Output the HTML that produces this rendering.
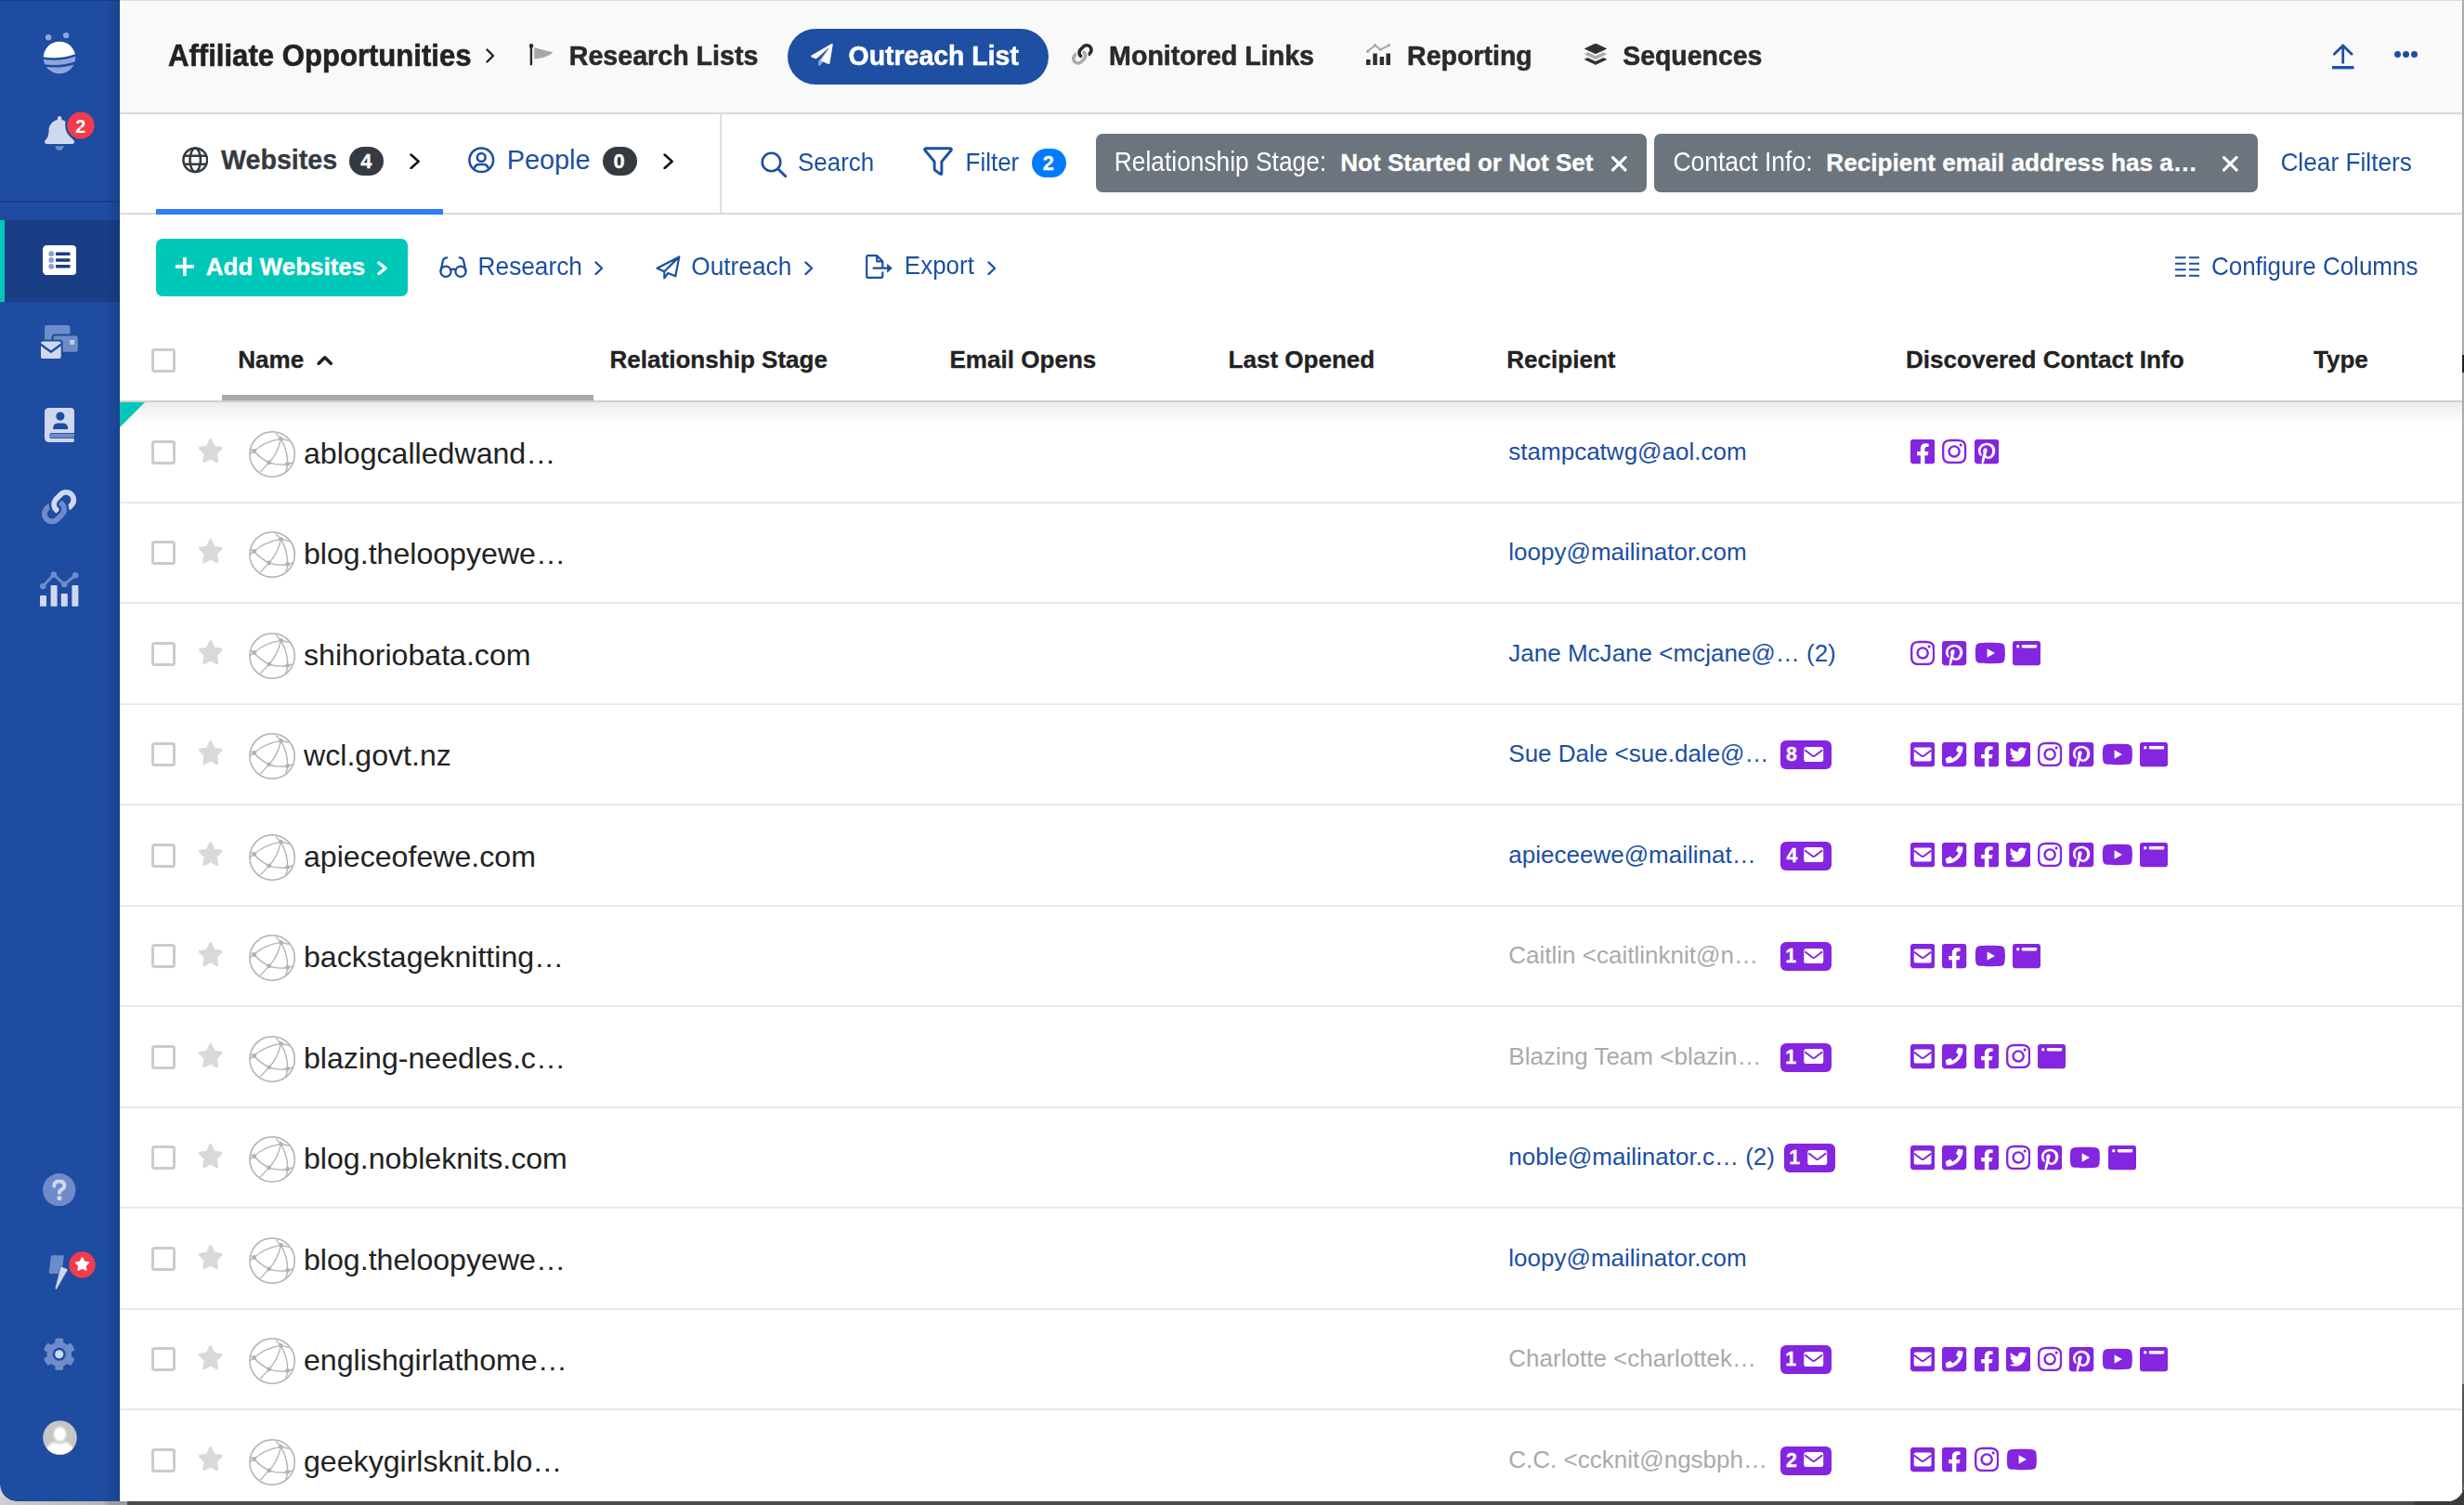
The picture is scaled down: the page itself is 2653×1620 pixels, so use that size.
<!DOCTYPE html>
<html><head><meta charset="utf-8"><title>BuzzStream - Outreach List</title>
<style>
html,body{margin:0;padding:0}
body{width:2653px;height:1620px;overflow:hidden;position:relative;background:#4b4b4b;font-family:"Liberation Sans",sans-serif}
#bg{position:absolute;left:0;top:0;width:2653px;height:1620px;background:#d6d6d6 linear-gradient(#d6d6d6,#d6d6d6)}
.a{position:absolute;display:block}
.t{position:absolute;line-height:1;white-space:nowrap}
#win{position:absolute;left:0;top:0;width:2653px;height:1616px;overflow:hidden;border-bottom-left-radius:18px;border-bottom-right-radius:18px;background:#fff}
</style></head><body>
<div id="bg"></div>
<div class="a" style="left:0;top:1612px;width:137px;height:8px;background:linear-gradient(90deg,#cfcfcf,#b5b5b5 110px,#9b9b9b 119px)"></div><div class="a" style="left:137px;top:1612px;width:2516px;height:8px;background:#4a4a4a"></div>
<div class="a" style="left:2600px;top:1580px;width:53px;height:40px;background:#3a3a3a"></div>
<div id="win">
<div class="a" style="left:129px;top:0px;width:2522px;height:1616px;background:#fff"></div>
<div class="a" style="left:129px;top:0px;width:2522px;height:122px;background:#f9f9f9"></div>
<div class="a" style="left:129px;top:0px;width:2522px;height:1px;background:#dcdcdc"></div>
<div class="a" style="left:129px;top:121px;width:2522px;height:2px;background:#d9d9d9"></div>
<div class="a" style="left:129px;top:229px;width:2522px;height:2px;background:#d9d9d9"></div>
<div class="a" style="left:774.5px;top:123px;width:2px;height:106px;background:#dde1e6"></div>
<div class="a" style="left:168px;top:225px;width:309px;height:6px;background:#2f7cf6"></div>
<div class="t" style="left:180.98px;top:44.86px;font-size:31.12px;font-weight:bold;color:#222;transform:scaleY(1.055);transform-origin:0 84.65%;-webkit-text-stroke:0.55px #222;">Affiliate Opportunities</div>
<svg class="a" style="left:522.5px;top:52px" width="9.5" height="16" viewBox="0 0 9.5 16"><path d="M1.5 1.5 L8.0 8.0 L1.5 14.5" fill="none" stroke="#222" stroke-width="2.4" stroke-linecap="round" stroke-linejoin="round"/></svg>
<svg class="a" style="left:570.00px;top:47.00px;" width="26" height="24" viewBox="0 0 26 24"><circle cx="1.9" cy="2.400" r="2.400" fill="#2b2b2b"/><rect x="0.700" y="2.400" width="2.400" height="20.800" fill="#2b2b2b"/><path d="M5.200 4.200C10 4.800 15 7.600 25.400 9.100 22 13 16 15.600 5.200 16.600Z" fill="#a8a8a8"/></svg>
<div class="t" style="left:612.79px;top:46.28px;font-size:28.61px;font-weight:bold;color:#2a2a2a;transform:scaleY(1.055);transform-origin:0 84.65%;-webkit-text-stroke:0.55px #2a2a2a;">Research Lists</div>
<div class="a" style="left:848px;top:31px;width:281px;height:60px;background:#1e4fa3;border-radius:30px"></div>
<svg class="a" style="left:872.50px;top:47.00px;color:#fff;" width="24" height="23.5" viewBox="0 0 512 512"><path fill="currentColor" d="M476 3.2L12.5 270.6c-18.1 10.4-15.8 35.6 2.200 43.200L121 358.400l287.300-253.200c5.500-4.900 13.300 2.600 8.600 8.300L176 407v80.500c0 23.600 28.500 32.900 42.500 15.800L282 426l124.600 52.200c14.200 6 30.400-2.900 33-18.200l72-432C515 7.800 493.300-6.800 476 3.200z"/><path d="M176 407v80.500c0 23.600 28.500 32.900 42.500 15.800L282 426l-52-21.800L408 114z" fill="#1e4fa3" opacity=".5"/></svg>
<div class="t" style="left:913.58px;top:46.43px;font-size:28.44px;font-weight:bold;color:#fff;transform:scaleY(1.055);transform-origin:0 84.65%;-webkit-text-stroke:0.55px #fff;">Outreach List</div>
<svg class="a" style="left:1154.00px;top:47.00px;" width="22.8" height="22.8" viewBox="0 0 512 512"><path fill="#ababab" d="M326.612 185.391c59.747 59.809 58.927 155.698.36 214.590-.110.120-.240.250-.360.370l-67.200 67.200c-59.270 59.270-155.699 59.262-214.960 0-59.270-59.260-59.270-155.700 0-214.960l37.106-37.106c9.840-9.840 26.786-3.300 27.294 10.606.648 17.722 3.826 35.527 9.690 52.721 1.986 5.822.567 12.262-3.783 16.612l-13.087 13.087c-28.026 28.026-28.905 73.660-1.155 101.960 28.024 28.579 74.086 28.749 102.325.510l67.200-67.190c28.191-28.191 28.073-73.757 0-101.830-3.701-3.694-7.429-6.564-10.341-8.569a16.037 16.037 0 0 1-6.947-12.606c-.396-10.567 3.348-21.456 11.698-29.806l21.054-21.055c5.521-5.521 14.182-6.199 20.584-1.731a152.482 152.482 0 0 1 20.522 17.197z"/><path fill="#2b2b2b" d="M467.547 44.449c-59.261-59.262-155.690-59.270-214.960 0l-67.200 67.200c-.120.120-.250.250-.360.370-58.566 58.892-59.387 154.781.360 214.590a152.454 152.454 0 0 0 20.521 17.196c6.402 4.468 15.064 3.789 20.584-1.731l21.054-21.055c8.350-8.350 12.094-19.239 11.698-29.806a16.037 16.037 0 0 0-6.947-12.606c-2.912-2.005-6.640-4.875-10.341-8.569-28.073-28.073-28.191-73.639 0-101.830l67.200-67.190c28.239-28.239 74.300-28.069 102.325.510 27.750 28.300 26.872 73.934-1.155 101.960l-13.087 13.087c-4.350 4.350-5.769 10.790-3.783 16.612 5.864 17.194 9.042 34.999 9.690 52.721.509 13.906 17.454 20.446 27.294 10.606l37.106-37.106c59.271-59.259 59.271-155.699.001-214.959z"/></svg>
<div class="t" style="left:1194.09px;top:46.28px;font-size:28.61px;font-weight:bold;color:#2a2a2a;transform:scaleY(1.055);transform-origin:0 84.65%;-webkit-text-stroke:0.55px #2a2a2a;">Monitored Links</div>
<svg class="a" style="left:1471.00px;top:47.00px;" width="26" height="23" viewBox="0 0 26 23"><g fill="#2f2f2f"><rect x="0" y="17" width="4.5" height="6"/><rect x="7.300" y="10.500" width="4.500" height="12.500"/><rect x="14.600" y="14" width="4.500" height="9"/><rect x="21.500" y="10.500" width="4.500" height="12.500"/></g><path d="M1.600 8.200L9.500 1.800 15.300 6.300 24.300 1.800" fill="none" stroke="#a6a6a6" stroke-width="1.900"/><g fill="#a6a6a6"><circle cx="1.700" cy="8.200" r="1.700"/><circle cx="9.500" cy="1.800" r="1.700"/><circle cx="15.300" cy="6.300" r="1.700"/><circle cx="24.300" cy="1.800" r="1.700"/></g></svg>
<div class="t" style="left:1515.09px;top:46.36px;font-size:28.52px;font-weight:bold;color:#2a2a2a;transform:scaleY(1.055);transform-origin:0 84.65%;-webkit-text-stroke:0.55px #2a2a2a;">Reporting</div>
<svg class="a" style="left:1705.50px;top:47.00px;" width="24" height="23" viewBox="0 0 24 23"><path d="M12 0L23.600 5.400 12 10.800 0.400 5.400Z" fill="#2f2f2f" stroke="#2f2f2f" stroke-width="0.8" stroke-linejoin="round"/><path d="M0.400 11.200L3.600 9.700 12 13.600 20.400 9.700 23.600 11.200 12 16.600Z" fill="#a9a9a9" stroke="#a9a9a9" stroke-width="0.800" stroke-linejoin="round"/><path d="M0.400 17L3.600 15.500 12 19.400 20.400 15.500 23.600 17 12 22.400Z" fill="#2f2f2f" stroke="#2f2f2f" stroke-width="0.800" stroke-linejoin="round"/></svg>
<div class="t" style="left:1747.18px;top:46.43px;font-size:28.44px;font-weight:bold;color:#2a2a2a;transform:scaleY(1.055);transform-origin:0 84.65%;-webkit-text-stroke:0.55px #2a2a2a;">Sequences</div>
<svg class="a" style="left:2511.00px;top:47.00px;color:#1c4fa3;" width="23.5" height="27.5" viewBox="0 0 23.5 27.5"><g fill="none" stroke="currentColor" stroke-width="2.800"><path d="M11.700 1.800V20.400M2.300 11.300L11.700 1.900 21.100 11.300" stroke-linecap="round" stroke-linejoin="round"/><path d="M0 25.700H23.500" stroke-width="3.300"/></g></svg>
<div class="a" style="left:2578px;top:54.5px;width:7.2px;height:7.2px;background:#1c4fa3;border-radius:50%"></div>
<div class="a" style="left:2587px;top:54.5px;width:7.2px;height:7.2px;background:#1c4fa3;border-radius:50%"></div>
<div class="a" style="left:2596px;top:54.5px;width:7.2px;height:7.2px;background:#1c4fa3;border-radius:50%"></div>
<svg class="a" style="left:195.50px;top:158.00px;color:#343a40;" width="28.5" height="28.5" viewBox="0 0 28 28"><g fill="none" stroke="currentColor" stroke-width="2.500"><circle cx="14" cy="14" r="12.600"/><ellipse cx="14" cy="14" rx="5.600" ry="12.600"/><path d="M2.500 9.600H25.500M2.500 18.400H25.500"/></g></svg>
<div class="t" style="left:237.97px;top:157.65px;font-size:28.65px;font-weight:bold;color:#343a40;-webkit-text-stroke:0.3px #343a40;">Websites</div>
<div class="a" style="left:376px;top:158px;width:37px;height:31px;background:#343a40;border-radius:16px"></div>
<div class="t" style="left:388.27px;top:162.75px;font-size:21.8px;font-weight:bold;color:#fff;-webkit-text-stroke:0.3px #fff;">4</div>
<svg class="a" style="left:441px;top:164.7px" width="11.2" height="17.5" viewBox="0 0 11.2 17.5"><path d="M1.55 1.55 L9.649999999999999 8.75 L1.55 15.95" fill="none" stroke="#111" stroke-width="2.5" stroke-linecap="round" stroke-linejoin="round"/></svg>
<svg class="a" style="left:504.00px;top:158.00px;color:#1c4fa3;" width="28.5" height="28.5" viewBox="0 0 28 28"><g fill="none" stroke="currentColor" stroke-width="2.500"><circle cx="14" cy="14" r="12.600"/><circle cx="14" cy="11.200" r="4.300"/><path d="M6.200 23.200Q8 18.700 11.500 18.700H16.500Q20 18.700 21.800 23.200"/></g></svg>
<div class="t" style="left:545.63px;top:158.04px;font-size:28.89px;font-weight:normal;color:#1c4fa3;">People</div>
<div class="a" style="left:649px;top:158px;width:36.5px;height:31px;background:#343a40;border-radius:16px"></div>
<div class="t" style="left:660.44px;top:162.75px;font-size:21.8px;font-weight:bold;color:#fff;-webkit-text-stroke:0.3px #fff;">0</div>
<svg class="a" style="left:713.5px;top:164.7px" width="11.2" height="17.5" viewBox="0 0 11.2 17.5"><path d="M1.55 1.55 L9.649999999999999 8.75 L1.55 15.95" fill="none" stroke="#111" stroke-width="2.5" stroke-linecap="round" stroke-linejoin="round"/></svg>
<svg class="a" style="left:819.00px;top:163.00px;color:#1c4fa3;" width="28" height="28" viewBox="0 0 28 28"><g fill="none" stroke="currentColor" stroke-width="2.600"><circle cx="11.500" cy="11.500" r="9.800"/><path d="M18.700 18.700L26.800 26.800" stroke-width="2.900" stroke-linecap="round"/></g></svg>
<div class="t" style="left:859.07px;top:162.93px;font-size:25.95px;font-weight:normal;color:#1c4fa3;transform:scaleY(1.07);transform-origin:0 84.65%;">Search</div>
<svg class="a" style="left:993.50px;top:158.00px;color:#1c4fa3;" width="32" height="32" viewBox="0 0 32 32"><path d="M2.400 1.800H29.600Q31 2.600 29.900 4L19.900 16V28.300Q19.900 30.300 18.200 29.100L13 25.500Q12.100 24.900 12.100 23.800V16L2.100 4Q1 2.600 2.400 1.800Z" fill="none" stroke="currentColor" stroke-width="2.900" stroke-linejoin="round"/></svg>
<div class="t" style="left:1039.62px;top:162.93px;font-size:25.95px;font-weight:normal;color:#1c4fa3;transform:scaleY(1.07);transform-origin:0 84.65%;">Filter</div>
<div class="a" style="left:1111px;top:160px;width:37px;height:31px;background:#007bff;border-radius:16px"></div>
<div class="t" style="left:1122.84px;top:164.75px;font-size:21.8px;font-weight:bold;color:#fff;-webkit-text-stroke:0.3px #fff;">2</div>
<div class="a" style="left:1180.25px;top:144px;width:592.5px;height:63px;background:#6c757d;border-radius:7px"></div>
<div class="t" style="left:1199.84px;top:162.01px;font-size:26.33px;font-weight:normal;color:#fff;transform:scaleY(1.09);transform-origin:0 84.65%;">Relationship Stage:</div>
<div class="t" style="left:1443.26px;top:162.23px;font-size:26.07px;font-weight:bold;color:#fff;-webkit-text-stroke:0.3px #fff;">Not Started or Not Set</div>
<svg class="a" style="left:1735.00px;top:168.00px;color:#fff;" width="16.5" height="16.5" viewBox="0 0 16.5 16.5"><path d="M1.600 1.600L14.900 14.900M14.900 1.600L1.600 14.900" fill="none" stroke="currentColor" stroke-width="3.100" stroke-linecap="square"/></svg>
<div class="a" style="left:1781.25px;top:144px;width:649.75px;height:63px;background:#6c757d;border-radius:7px"></div>
<div class="t" style="left:1801.41px;top:161.88px;font-size:26.48px;font-weight:normal;color:#fff;transform:scaleY(1.09);transform-origin:0 84.65%;">Contact Info:</div>
<div class="t" style="left:1966.25px;top:162.16px;font-size:26.16px;font-weight:bold;color:#fff;-webkit-text-stroke:0.3px #fff;">Recipient email address has a…</div>
<svg class="a" style="left:2393.00px;top:168.00px;color:#fff;" width="16.5" height="16.5" viewBox="0 0 16.5 16.5"><path d="M1.600 1.600L14.900 14.900M14.900 1.600L1.600 14.900" fill="none" stroke="currentColor" stroke-width="3.100" stroke-linecap="square"/></svg>
<div class="t" style="left:2455.42px;top:162.26px;font-size:26.27px;font-weight:normal;color:#1c4fa3;transform:scaleY(1.07);transform-origin:0 84.65%;">Clear Filters</div>
<div class="a" style="left:168px;top:257px;width:271px;height:62px;background:#00c8b8;border-radius:7px"></div>
<svg class="a" style="left:189.10px;top:276.90px;color:#fff;" width="19.8" height="19.8" viewBox="0 0 20 20"><path d="M10 0.800V19.200M0.800 10H19.200" fill="none" stroke="currentColor" stroke-width="3.600" stroke-linecap="round"/></svg>
<div class="t" style="left:221.85px;top:274.33px;font-size:26.01px;font-weight:bold;color:#fff;-webkit-text-stroke:0.3px #fff;">Add Websites</div>
<svg class="a" style="left:406px;top:281px" width="11" height="15.5" viewBox="0 0 11 15.5"><path d="M2.0 2.0 L9.0 7.75 L2.0 13.5" fill="none" stroke="#fff" stroke-width="3.4" stroke-linecap="round" stroke-linejoin="round"/></svg>
<svg class="a" style="left:472.50px;top:276.00px;color:#1c4fa3;" width="30" height="23" viewBox="0 0 30 23"><g fill="none" stroke="currentColor" stroke-width="2.200" stroke-linecap="round"><circle cx="7" cy="16.200" r="5.600"/><circle cx="23" cy="16.200" r="5.600"/><path d="M12.400 14.600Q15 12.800 17.600 14.600"/><path d="M1.500 15.500L4 4.300Q4.800 1.300 8.300 1.300"/><path d="M28.500 15.500L26 4.300Q25.200 1.300 21.700 1.300"/></g></svg>
<div class="t" style="left:514.6px;top:274.12px;font-size:26.26px;font-weight:normal;color:#1c4fa3;transform:scaleY(1.07);transform-origin:0 84.65%;">Research</div>
<svg class="a" style="left:640px;top:280.5px" width="9.5" height="15.5" viewBox="0 0 9.5 15.5"><path d="M1.4000000000000001 1.4000000000000001 L8.1 7.75 L1.4000000000000001 14.1" fill="none" stroke="#1c4fa3" stroke-width="2.2" stroke-linecap="round" stroke-linejoin="round"/></svg>
<svg class="a" style="left:706.00px;top:274.50px;color:#1c4fa3;" width="27" height="26" viewBox="0 0 27 26"><path d="M25.300 1.400L1.500 13.800 9.300 17.200V24.400L13.300 18.900 21.300 22.300ZM25.300 1.400L9.300 17.200" fill="none" stroke="currentColor" stroke-width="2.200" stroke-linejoin="round" stroke-linecap="round"/></svg>
<div class="t" style="left:744.25px;top:274.10px;font-size:26.29px;font-weight:normal;color:#1c4fa3;transform:scaleY(1.07);transform-origin:0 84.65%;">Outreach</div>
<svg class="a" style="left:866px;top:280.5px" width="9.5" height="15.5" viewBox="0 0 9.5 15.5"><path d="M1.4000000000000001 1.4000000000000001 L8.1 7.75 L1.4000000000000001 14.1" fill="none" stroke="#1c4fa3" stroke-width="2.2" stroke-linecap="round" stroke-linejoin="round"/></svg>
<svg class="a" style="left:932.00px;top:274.00px;color:#1c4fa3;" width="29" height="26" viewBox="0 0 29 26"><g fill="none" stroke="currentColor" stroke-width="2.200" stroke-linejoin="round"><path d="M18.300 18.600V23.600Q18.300 24.800 17.100 24.800H2.400Q1.200 24.800 1.200 23.600V2.400Q1.200 1.200 2.400 1.200H12.200L18.300 7.300V14.600"/><path d="M12.200 1.200V7.300H18.300"/><path d="M8.600 14.700H24" stroke-linecap="round"/></g><path d="M28.300 14.700L23.500 10.400V19Z" fill="currentColor" stroke="currentColor" stroke-width="0.800" stroke-linejoin="round"/></svg>
<div class="t" style="left:973.87px;top:274.37px;font-size:25.96px;font-weight:normal;color:#1c4fa3;transform:scaleY(1.07);transform-origin:0 84.65%;">Export</div>
<svg class="a" style="left:1063px;top:280.5px" width="9.5" height="15.5" viewBox="0 0 9.5 15.5"><path d="M1.4000000000000001 1.4000000000000001 L8.1 7.75 L1.4000000000000001 14.1" fill="none" stroke="#1c4fa3" stroke-width="2.2" stroke-linecap="round" stroke-linejoin="round"/></svg>
<svg class="a" style="left:2341.50px;top:276.00px;color:#1c4fa3;" width="26.5" height="22" viewBox="0 0 26.5 22"><path d="M0 1.300H11.500M15 1.300H26.500M0 7.800H11.500M15 7.800H26.500M0 14.300H11.500M15 14.300H26.500M0 20.700H11.500M15 20.700H26.500" fill="none" stroke="currentColor" stroke-width="2"/></svg>
<div class="t" style="left:2380.93px;top:274.33px;font-size:26.01px;font-weight:normal;color:#1c4fa3;transform:scaleY(1.07);transform-origin:0 84.65%;">Configure Columns</div>
<div class="a" style="left:163px;top:375px;width:26px;height:26px;border:3px solid #cbcbcb;border-radius:3.5px;box-sizing:border-box;background:#fff"></div>
<div class="t" style="left:256.26px;top:373.55px;font-size:26.05px;font-weight:bold;color:#222;-webkit-text-stroke:0.3px #222;">Name</div>
<svg class="a" style="left:340.5px;top:381.5px" width="17.5" height="11.5" viewBox="0 0 17.5 11.5"><path d="M2.2 9.3 L8.75 2.8 L15.3 9.3" fill="none" stroke="#222" stroke-width="3.6" stroke-linecap="round" stroke-linejoin="round"/></svg>
<div class="t" style="left:656.51px;top:373.55px;font-size:26.05px;font-weight:bold;color:#222;-webkit-text-stroke:0.3px #222;">Relationship Stage</div>
<div class="t" style="left:1022.51px;top:373.55px;font-size:26.05px;font-weight:bold;color:#222;-webkit-text-stroke:0.3px #222;">Email Opens</div>
<div class="t" style="left:1322.51px;top:373.55px;font-size:26.05px;font-weight:bold;color:#222;-webkit-text-stroke:0.3px #222;">Last Opened</div>
<div class="t" style="left:1622.26px;top:373.55px;font-size:26.05px;font-weight:bold;color:#222;-webkit-text-stroke:0.3px #222;">Recipient</div>
<div class="t" style="left:2052.01px;top:373.55px;font-size:26.05px;font-weight:bold;color:#222;-webkit-text-stroke:0.3px #222;">Discovered Contact Info</div>
<div class="t" style="left:2490.96px;top:373.55px;font-size:26.05px;font-weight:bold;color:#222;-webkit-text-stroke:0.3px #222;">Type</div>
<div class="a" style="left:239.25px;top:425px;width:399.5px;height:6.5px;background:#a9a9a9"></div>
<div class="a" style="left:129px;top:431px;width:2522px;height:2px;background:#cfcfcf"></div>
<div class="a" style="left:129px;top:433px;width:2522px;height:26px;background:linear-gradient(#ebebeb,#f4f4f4 35%,#fbfbfb 70%,#fff)"></div>
<svg class="a" style="left:129px;top:433px" width="27" height="27" viewBox="0 0 27 27"><path d="M0 0H27L0 27Z" fill="#00c8b8"/></svg>
<div class="a" style="left:163px;top:473.5px;width:26px;height:26px;border:3px solid #cbcbcb;border-radius:3.5px;box-sizing:border-box;background:#fff"></div>
<svg class="a" style="left:212.90px;top:471.95px;color:#d9d9d9;" width="27.4" height="26.2" viewBox="0 0 576 512" preserveAspectRatio="none"><path fill="currentColor" d="M259.3 17.8L194 150.200 47.900 171.500c-26.200 3.800-36.700 36.100-17.700 54.600l105.700 103-25 145.500c-4.500 26.300 23.200 46 46.400 33.700L288 439.600l130.700 68.700c23.200 12.200 50.900-7.400 46.400-33.700l-25-145.500 105.700-103c19-18.500 8.500-50.800-17.700-54.600L382 150.200 316.700 17.800c-11.700-23.600-45.600-23.900-57.400 0z"/></svg>
<svg class="a" style="left:267.70px;top:463.70px;" width="50" height="50" viewBox="0 0 50 50"><g fill="none" stroke="#b2b2b2" stroke-width="1.350"><circle cx="25.100" cy="25" r="24.200" stroke-width="1.500"/><path d="M1.600 19.500L5.700 21.500Q16 11.500 34.500 8.300L43 10.300"/><path d="M29 2.600L34.500 8.300Q42.200 22 41.600 35.500Q41.200 40 39.800 43.800"/><path d="M34.500 8.300Q31 24 21.700 33.900L12.200 44.100"/><path d="M1.300 24.600L5.700 21.500Q11.500 28.800 21.700 33.900Q31.500 37.300 41.600 35.500L48.200 33.600"/></g><g fill="#b2b2b2"><circle cx="34.500" cy="8.300" r="2.400"/><circle cx="5.700" cy="21.500" r="2.400"/><circle cx="21.700" cy="33.900" r="2.400"/><circle cx="41.600" cy="35.500" r="2.400"/></g></svg>
<div class="t" style="left:327px;top:471.71px;font-size:32.12px;font-weight:normal;color:#222;">ablogcalledwand…</div>
<div class="t" style="left:1624.3px;top:472.57px;font-size:26.02px;font-weight:normal;color:#1c4fa3;">stampcatwg@aol.com</div>
<svg class="a" style="left:2057.00px;top:471.20px;color:#8425e0;" width="26.25" height="30" viewBox="0 0 448 512"><path fill="currentColor" d="M400 32H48A48 48 0 0 0 0 80v352a48 48 0 0 0 48 48h137.250V327.690h-63V256h63v-54.640c0-62.150 37-96.480 93.670-96.480 27.140 0 55.520 4.840 55.520 4.840v61h-31.270c-30.810 0-40.420 19.120-40.420 38.730V256h68.780l-11 71.690h-57.780V480H400a48 48 0 0 0 48-48V80a48 48 0 0 0-48-48z"/></svg>
<svg class="a" style="left:2091.25px;top:471.20px;color:#8425e0;" width="26.25" height="30" viewBox="0 0 448 512"><path fill="currentColor" d="M224.100 141c-63.600 0-114.900 51.300-114.900 114.900s51.300 114.900 114.900 114.900S339 319.500 339 255.900 287.700 141 224.100 141zm0 189.600c-41.100 0-74.700-33.500-74.700-74.700s33.500-74.700 74.700-74.700 74.700 33.500 74.700 74.700-33.600 74.700-74.700 74.700zm146.400-194.300c0 14.900-12 26.800-26.800 26.800-14.900 0-26.800-12-26.800-26.800s12-26.800 26.800-26.800 26.800 12 26.800 26.800zm76.100 27.200c-1.700-35.900-9.900-67.700-36.200-93.900-26.200-26.200-58-34.400-93.900-36.200-37-2.100-147.900-2.100-184.900 0-35.800 1.700-67.600 9.900-93.900 36.100s-34.400 58-36.200 93.900c-2.100 37-2.100 147.900 0 184.900 1.700 35.900 9.900 67.700 36.200 93.900s58 34.400 93.900 36.200c37 2.100 147.900 2.100 184.900 0 35.900-1.700 67.700-9.900 93.900-36.200 26.200-26.200 34.400-58 36.200-93.900 2.100-37 2.100-147.800 0-184.800zM398.800 388c-7.800 19.600-22.900 34.700-42.600 42.600-29.500 11.700-99.500 9-132.100 9s-102.700 2.600-132.100-9c-19.600-7.800-34.700-22.900-42.600-42.600-11.700-29.500-9-99.500-9-132.100s-2.600-102.700 9-132.100c7.800-19.600 22.900-34.700 42.600-42.600 29.500-11.700 99.500-9 132.100-9s102.700-2.600 132.100 9c19.600 7.800 34.700 22.900 42.600 42.600 11.700 29.500 9 99.500 9 132.100s2.700 102.700-9 132.100z"/></svg>
<svg class="a" style="left:2125.50px;top:471.20px;color:#8425e0;" width="26.25" height="30" viewBox="0 0 448 512"><path fill="currentColor" d="M448 80v352c0 26.500-21.500 48-48 48H154.400c9.800-16.400 22.400-40 27.400-59.300 3-11.500 15.300-58.400 15.300-58.400 8 15.300 31.400 28.200 56.300 28.200 74.100 0 127.400-68.100 127.400-152.700 0-81.100-66.200-141.800-151.400-141.800-106 0-162.200 71.100-162.200 148.600 0 36 19.200 80.800 49.800 95.100 4.700 2.200 7.100 1.200 8.200-3.300.8-3.400 5-20.100 6.800-27.800.6-2.500.3-4.600-1.700-7-10.100-12.300-18.300-34.900-18.300-56 0-54.200 41-106.600 110.900-106.600 60.300 0 102.600 41.100 102.600 99.900 0 66.400-33.500 112.400-77.200 112.400-24.100 0-42.100-19.900-36.400-44.400 6.900-29.200 20.300-60.700 20.300-81.800 0-53-75.500-45.700-75.500 25 0 21.700 7.300 36.500 7.300 36.500-31.400 132.800-36.100 134.500-29.600 192.600l2.200.8H48c-26.500 0-48-21.500-48-48V80c0-26.500 21.500-48 48-48h352c26.500 0 48 21.500 48 48z"/></svg>
<div class="a" style="left:129px;top:539.5px;width:2522px;height:2px;background:#e9e9e9"></div>
<div class="a" style="left:163px;top:582.0px;width:26px;height:26px;border:3px solid #cbcbcb;border-radius:3.5px;box-sizing:border-box;background:#fff"></div>
<svg class="a" style="left:212.90px;top:580.45px;color:#d9d9d9;" width="27.4" height="26.2" viewBox="0 0 576 512" preserveAspectRatio="none"><path fill="currentColor" d="M259.3 17.8L194 150.200 47.900 171.500c-26.200 3.800-36.700 36.100-17.700 54.600l105.700 103-25 145.500c-4.500 26.300 23.200 46 46.400 33.700L288 439.600l130.700 68.700c23.200 12.200 50.900-7.400 46.400-33.700l-25-145.500 105.700-103c19-18.500 8.500-50.800-17.700-54.600L382 150.200 316.700 17.800c-11.700-23.600-45.600-23.900-57.400 0z"/></svg>
<svg class="a" style="left:267.70px;top:572.20px;" width="50" height="50" viewBox="0 0 50 50"><g fill="none" stroke="#b2b2b2" stroke-width="1.350"><circle cx="25.100" cy="25" r="24.200" stroke-width="1.500"/><path d="M1.600 19.500L5.700 21.500Q16 11.500 34.500 8.300L43 10.300"/><path d="M29 2.600L34.500 8.300Q42.200 22 41.600 35.500Q41.200 40 39.800 43.800"/><path d="M34.500 8.300Q31 24 21.700 33.900L12.200 44.100"/><path d="M1.300 24.600L5.700 21.500Q11.500 28.800 21.700 33.900Q31.500 37.300 41.600 35.500L48.200 33.600"/></g><g fill="#b2b2b2"><circle cx="34.500" cy="8.300" r="2.400"/><circle cx="5.700" cy="21.500" r="2.400"/><circle cx="21.700" cy="33.900" r="2.400"/><circle cx="41.600" cy="35.500" r="2.400"/></g></svg>
<div class="t" style="left:327px;top:580.21px;font-size:32.12px;font-weight:normal;color:#222;">blog.theloopyewe…</div>
<div class="t" style="left:1624.3px;top:581.07px;font-size:26.02px;font-weight:normal;color:#1c4fa3;">loopy@mailinator.com</div>
<div class="a" style="left:129px;top:648.0px;width:2522px;height:2px;background:#e9e9e9"></div>
<div class="a" style="left:163px;top:690.5px;width:26px;height:26px;border:3px solid #cbcbcb;border-radius:3.5px;box-sizing:border-box;background:#fff"></div>
<svg class="a" style="left:212.90px;top:688.95px;color:#d9d9d9;" width="27.4" height="26.2" viewBox="0 0 576 512" preserveAspectRatio="none"><path fill="currentColor" d="M259.3 17.8L194 150.200 47.900 171.500c-26.200 3.800-36.700 36.100-17.700 54.600l105.700 103-25 145.500c-4.500 26.300 23.200 46 46.400 33.700L288 439.600l130.700 68.700c23.200 12.200 50.900-7.400 46.400-33.700l-25-145.500 105.700-103c19-18.500 8.500-50.800-17.700-54.600L382 150.200 316.700 17.800c-11.700-23.600-45.600-23.900-57.400 0z"/></svg>
<svg class="a" style="left:267.70px;top:680.70px;" width="50" height="50" viewBox="0 0 50 50"><g fill="none" stroke="#b2b2b2" stroke-width="1.350"><circle cx="25.100" cy="25" r="24.200" stroke-width="1.500"/><path d="M1.600 19.500L5.700 21.500Q16 11.500 34.500 8.300L43 10.300"/><path d="M29 2.600L34.500 8.300Q42.200 22 41.600 35.500Q41.200 40 39.800 43.800"/><path d="M34.500 8.300Q31 24 21.700 33.900L12.200 44.100"/><path d="M1.300 24.600L5.700 21.500Q11.500 28.800 21.700 33.900Q31.500 37.300 41.600 35.500L48.200 33.600"/></g><g fill="#b2b2b2"><circle cx="34.500" cy="8.300" r="2.400"/><circle cx="5.700" cy="21.500" r="2.400"/><circle cx="21.700" cy="33.900" r="2.400"/><circle cx="41.600" cy="35.500" r="2.400"/></g></svg>
<div class="t" style="left:327px;top:688.71px;font-size:32.12px;font-weight:normal;color:#222;">shihoriobata.com</div>
<div class="t" style="left:1624.3px;top:689.57px;font-size:26.02px;font-weight:normal;color:#1c4fa3;">Jane McJane &lt;mcjane@… (2)</div>
<svg class="a" style="left:2057.00px;top:688.20px;color:#8425e0;" width="26.25" height="30" viewBox="0 0 448 512"><path fill="currentColor" d="M224.100 141c-63.600 0-114.900 51.300-114.900 114.900s51.300 114.900 114.900 114.900S339 319.500 339 255.900 287.700 141 224.100 141zm0 189.600c-41.100 0-74.700-33.500-74.700-74.700s33.500-74.700 74.700-74.700 74.700 33.500 74.700 74.700-33.600 74.700-74.700 74.700zm146.400-194.300c0 14.900-12 26.800-26.800 26.800-14.900 0-26.800-12-26.800-26.800s12-26.800 26.800-26.800 26.800 12 26.800 26.800zm76.100 27.200c-1.700-35.900-9.900-67.700-36.200-93.900-26.200-26.200-58-34.400-93.900-36.200-37-2.100-147.900-2.100-184.900 0-35.800 1.700-67.600 9.900-93.900 36.100s-34.400 58-36.200 93.900c-2.100 37-2.100 147.900 0 184.900 1.700 35.900 9.900 67.700 36.200 93.900s58 34.400 93.900 36.200c37 2.100 147.900 2.100 184.900 0 35.900-1.700 67.700-9.900 93.900-36.200 26.200-26.200 34.400-58 36.200-93.900 2.100-37 2.100-147.800 0-184.800zM398.800 388c-7.800 19.600-22.900 34.700-42.600 42.600-29.500 11.700-99.500 9-132.100 9s-102.700 2.600-132.100-9c-19.600-7.800-34.700-22.900-42.600-42.600-11.700-29.500-9-99.500-9-132.100s-2.600-102.700 9-132.100c7.800-19.600 22.900-34.700 42.600-42.600 29.500-11.700 99.500-9 132.100-9s102.700-2.600 132.100 9c19.600 7.800 34.700 22.900 42.600 42.600 11.700 29.500 9 99.500 9 132.100s2.700 102.700-9 132.100z"/></svg>
<svg class="a" style="left:2091.25px;top:688.20px;color:#8425e0;" width="26.25" height="30" viewBox="0 0 448 512"><path fill="currentColor" d="M448 80v352c0 26.500-21.500 48-48 48H154.400c9.800-16.400 22.400-40 27.400-59.300 3-11.500 15.300-58.400 15.300-58.400 8 15.300 31.400 28.200 56.300 28.200 74.100 0 127.400-68.100 127.400-152.700 0-81.100-66.200-141.800-151.400-141.800-106 0-162.200 71.100-162.200 148.600 0 36 19.200 80.800 49.800 95.100 4.700 2.200 7.100 1.200 8.200-3.300.8-3.400 5-20.100 6.800-27.800.6-2.500.3-4.600-1.700-7-10.100-12.300-18.300-34.900-18.300-56 0-54.200 41-106.600 110.900-106.600 60.300 0 102.600 41.100 102.600 99.900 0 66.400-33.500 112.400-77.200 112.400-24.100 0-42.100-19.900-36.400-44.400 6.900-29.200 20.300-60.700 20.300-81.800 0-53-75.500-45.700-75.500 25 0 21.700 7.300 36.500 7.300 36.500-31.400 132.800-36.100 134.500-29.600 192.600l2.200.8H48c-26.500 0-48-21.500-48-48V80c0-26.500 21.500-48 48-48h352c26.500 0 48 21.500 48 48z"/></svg>
<svg class="a" style="left:2125.50px;top:688.20px;color:#8425e0;" width="33.75" height="30" viewBox="0 0 576 512"><path fill="currentColor" d="M549.655 124.083c-6.281-23.650-24.787-42.276-48.284-48.597C458.781 64 288 64 288 64S117.220 64 74.629 75.486c-23.497 6.322-42.003 24.947-48.284 48.597-11.412 42.867-11.412 132.305-11.412 132.305s0 89.438 11.412 132.305c6.281 23.650 24.787 41.500 48.284 47.821C117.220 448 288 448 288 448s170.780 0 213.371-11.486c23.497-6.321 42.003-24.171 48.284-47.821 11.412-42.867 11.412-132.305 11.412-132.305s0-89.438-11.412-132.305zm-317.510 213.508V175.185l142.739 81.205-142.739 81.201z"/></svg>
<svg class="a" style="left:2167.25px;top:688.20px;color:#8425e0;" width="30" height="30" viewBox="0 0 512 512"><path fill="currentColor" d="M48 32H464a48 48 0 0 1 48 48V432a48 48 0 0 1-48 48H48a48 48 0 0 1-48-48V80a48 48 0 0 1 48-48Z"/><circle cx="98" cy="131" r="29" fill="#fff"/><rect x="166" y="102" width="282" height="58" rx="22" fill="#fff"/></svg>
<div class="a" style="left:129px;top:756.5px;width:2522px;height:2px;background:#e9e9e9"></div>
<div class="a" style="left:163px;top:799.0px;width:26px;height:26px;border:3px solid #cbcbcb;border-radius:3.5px;box-sizing:border-box;background:#fff"></div>
<svg class="a" style="left:212.90px;top:797.45px;color:#d9d9d9;" width="27.4" height="26.2" viewBox="0 0 576 512" preserveAspectRatio="none"><path fill="currentColor" d="M259.3 17.8L194 150.200 47.900 171.500c-26.200 3.800-36.700 36.100-17.700 54.600l105.700 103-25 145.500c-4.500 26.300 23.200 46 46.400 33.700L288 439.600l130.700 68.700c23.200 12.200 50.900-7.400 46.400-33.700l-25-145.500 105.700-103c19-18.500 8.500-50.800-17.700-54.600L382 150.200 316.700 17.800c-11.700-23.600-45.600-23.900-57.400 0z"/></svg>
<svg class="a" style="left:267.70px;top:789.20px;" width="50" height="50" viewBox="0 0 50 50"><g fill="none" stroke="#b2b2b2" stroke-width="1.350"><circle cx="25.100" cy="25" r="24.200" stroke-width="1.500"/><path d="M1.600 19.500L5.700 21.500Q16 11.500 34.500 8.300L43 10.300"/><path d="M29 2.600L34.500 8.300Q42.200 22 41.600 35.500Q41.200 40 39.800 43.800"/><path d="M34.500 8.300Q31 24 21.700 33.900L12.200 44.100"/><path d="M1.300 24.600L5.700 21.500Q11.500 28.800 21.700 33.900Q31.500 37.300 41.600 35.500L48.200 33.600"/></g><g fill="#b2b2b2"><circle cx="34.500" cy="8.300" r="2.400"/><circle cx="5.700" cy="21.500" r="2.400"/><circle cx="21.700" cy="33.900" r="2.400"/><circle cx="41.600" cy="35.500" r="2.400"/></g></svg>
<div class="t" style="left:327px;top:797.21px;font-size:32.12px;font-weight:normal;color:#222;">wcl.govt.nz</div>
<div class="t" style="left:1624.3px;top:798.07px;font-size:26.02px;font-weight:normal;color:#1c4fa3;">Sue Dale &lt;sue.dale@…</div>
<div class="a" style="left:1917px;top:797.0px;width:55px;height:31px;background:#8425e0;border-radius:6px"></div>
<div class="t" style="left:1923.02px;top:802.17px;font-size:21.3px;font-weight:bold;color:#fff;-webkit-text-stroke:0.3px #fff;">8</div>
<svg class="a" style="left:1942.30px;top:803.70px;color:#fff;" width="21.5" height="16.2" viewBox="0 0 22 17"><rect x="0" y="0" width="22" height="17" rx="2.800" fill="#fff"/><path d="M1 3.300L9.600 9.900Q11 10.900 12.400 9.900L21 3.300" fill="none" stroke="#8425e0" stroke-width="2"/></svg>
<svg class="a" style="left:2057.00px;top:796.70px;color:#8425e0;" width="26.25" height="30" viewBox="0 0 448 512"><path fill="currentColor" d="M400 32H48C21.5 32 0 53.5 0 80v352c0 26.5 21.5 48 48 48h352c26.5 0 48-21.5 48-48V80c0-26.5-21.5-48-48-48z"/><rect x="64" y="128" width="320" height="256" rx="28" fill="#fff"/><path d="M64 178L200 282Q224 300 248 282L384 178" fill="none" stroke="currentColor" stroke-width="34"/></svg>
<svg class="a" style="left:2091.25px;top:796.70px;color:#8425e0;" width="26.25" height="30" viewBox="0 0 448 512"><path fill="currentColor" d="M400 32H48C21.5 32 0 53.5 0 80v352c0 26.5 21.5 48 48 48h352c26.5 0 48-21.5 48-48V80c0-26.5-21.5-48-48-48z"/><path fill="#fff" d="M94 416c-7.033 0-13.057-4.873-14.616-11.627l-14.998-65a15 15 0 0 1 8.707-17.160l69.998-29.999a15 15 0 0 1 17.518 4.289l30.997 37.885c48.944-22.963 88.297-62.858 110.781-110.780l-37.886-30.997a15.001 15.001 0 0 1-4.289-17.518l30-69.998a15 15 0 0 1 17.160-8.707l65 14.998A14.997 14.997 0 0 1 384 126c0 160.292-129.945 290-290 290z"/></svg>
<svg class="a" style="left:2125.50px;top:796.70px;color:#8425e0;" width="26.25" height="30" viewBox="0 0 448 512"><path fill="currentColor" d="M400 32H48A48 48 0 0 0 0 80v352a48 48 0 0 0 48 48h137.250V327.690h-63V256h63v-54.640c0-62.150 37-96.480 93.670-96.480 27.140 0 55.520 4.840 55.520 4.840v61h-31.270c-30.810 0-40.420 19.120-40.420 38.730V256h68.780l-11 71.690h-57.780V480H400a48 48 0 0 0 48-48V80a48 48 0 0 0-48-48z"/></svg>
<svg class="a" style="left:2159.75px;top:796.70px;color:#8425e0;" width="26.25" height="30" viewBox="0 0 448 512"><path fill="currentColor" d="M400 32H48C21.500 32 0 53.500 0 80v352c0 26.500 21.500 48 48 48h352c26.500 0 48-21.500 48-48V80c0-26.500-21.500-48-48-48zm-48.900 158.800c.2 2.800.2 5.700.2 8.500 0 86.700-66 186.600-186.600 186.600-37.200 0-71.700-10.800-100.700-29.400 5.300.6 10.400.8 15.800.8 30.700 0 58.900-10.400 81.400-28-28.800-.6-53-19.500-61.300-45.500 10.100 1.500 19.200 1.500 29.600-1.200-30-6.100-52.500-32.500-52.500-64.400v-.8c8.700 4.900 18.900 7.900 29.600 8.300a65.447 65.447 0 0 1-29.200-54.600c0-12.200 3.200-23.400 8.900-33.100 32.300 39.800 80.800 65.800 135.200 68.600-9.300-44.500 24-80.600 64-80.600 18.900 0 35.900 7.900 47.900 20.700 14.800-2.800 29-8.300 41.600-15.800-4.900 15.200-15.200 28-28.800 36.100 13.200-1.400 26-5.100 37.800-10.200-8.900 13.100-20.100 24.700-32.900 34z"/></svg>
<svg class="a" style="left:2194.00px;top:796.70px;color:#8425e0;" width="26.25" height="30" viewBox="0 0 448 512"><path fill="currentColor" d="M224.100 141c-63.600 0-114.900 51.300-114.900 114.900s51.300 114.900 114.900 114.900S339 319.500 339 255.900 287.700 141 224.100 141zm0 189.600c-41.100 0-74.700-33.500-74.700-74.700s33.500-74.700 74.700-74.700 74.700 33.500 74.700 74.700-33.600 74.700-74.700 74.700zm146.400-194.300c0 14.900-12 26.800-26.800 26.800-14.900 0-26.800-12-26.800-26.800s12-26.800 26.800-26.800 26.800 12 26.800 26.800zm76.100 27.200c-1.700-35.900-9.900-67.700-36.200-93.900-26.200-26.200-58-34.400-93.900-36.200-37-2.100-147.900-2.100-184.900 0-35.800 1.700-67.600 9.900-93.900 36.100s-34.400 58-36.200 93.900c-2.100 37-2.100 147.900 0 184.900 1.700 35.900 9.900 67.700 36.200 93.900s58 34.400 93.900 36.200c37 2.100 147.900 2.100 184.900 0 35.900-1.700 67.700-9.900 93.900-36.200 26.200-26.200 34.400-58 36.200-93.900 2.100-37 2.100-147.800 0-184.800zM398.800 388c-7.800 19.600-22.900 34.700-42.600 42.600-29.500 11.700-99.500 9-132.100 9s-102.700 2.600-132.100-9c-19.600-7.800-34.700-22.900-42.600-42.600-11.700-29.500-9-99.500-9-132.100s-2.600-102.700 9-132.100c7.800-19.600 22.900-34.700 42.600-42.600 29.500-11.700 99.500-9 132.100-9s102.700-2.600 132.100 9c19.600 7.800 34.700 22.900 42.600 42.600 11.700 29.500 9 99.500 9 132.100s2.700 102.700-9 132.100z"/></svg>
<svg class="a" style="left:2228.25px;top:796.70px;color:#8425e0;" width="26.25" height="30" viewBox="0 0 448 512"><path fill="currentColor" d="M448 80v352c0 26.500-21.500 48-48 48H154.400c9.800-16.400 22.400-40 27.400-59.300 3-11.500 15.300-58.400 15.300-58.400 8 15.300 31.400 28.200 56.300 28.200 74.100 0 127.400-68.100 127.400-152.700 0-81.100-66.200-141.800-151.400-141.800-106 0-162.200 71.100-162.200 148.600 0 36 19.200 80.800 49.800 95.100 4.700 2.200 7.100 1.200 8.200-3.300.8-3.400 5-20.100 6.800-27.800.6-2.500.3-4.600-1.700-7-10.100-12.300-18.300-34.900-18.300-56 0-54.200 41-106.600 110.900-106.600 60.300 0 102.600 41.100 102.600 99.900 0 66.400-33.500 112.400-77.200 112.400-24.100 0-42.100-19.900-36.400-44.400 6.900-29.200 20.300-60.700 20.300-81.800 0-53-75.500-45.700-75.500 25 0 21.700 7.300 36.500 7.300 36.500-31.400 132.800-36.100 134.500-29.600 192.600l2.200.8H48c-26.500 0-48-21.500-48-48V80c0-26.500 21.500-48 48-48h352c26.500 0 48 21.500 48 48z"/></svg>
<svg class="a" style="left:2262.50px;top:796.70px;color:#8425e0;" width="33.75" height="30" viewBox="0 0 576 512"><path fill="currentColor" d="M549.655 124.083c-6.281-23.650-24.787-42.276-48.284-48.597C458.781 64 288 64 288 64S117.220 64 74.629 75.486c-23.497 6.322-42.003 24.947-48.284 48.597-11.412 42.867-11.412 132.305-11.412 132.305s0 89.438 11.412 132.305c6.281 23.650 24.787 41.500 48.284 47.821C117.220 448 288 448 288 448s170.780 0 213.371-11.486c23.497-6.321 42.003-24.171 48.284-47.821 11.412-42.867 11.412-132.305 11.412-132.305s0-89.438-11.412-132.305zm-317.510 213.508V175.185l142.739 81.205-142.739 81.201z"/></svg>
<svg class="a" style="left:2304.25px;top:796.70px;color:#8425e0;" width="30" height="30" viewBox="0 0 512 512"><path fill="currentColor" d="M48 32H464a48 48 0 0 1 48 48V432a48 48 0 0 1-48 48H48a48 48 0 0 1-48-48V80a48 48 0 0 1 48-48Z"/><circle cx="98" cy="131" r="29" fill="#fff"/><rect x="166" y="102" width="282" height="58" rx="22" fill="#fff"/></svg>
<div class="a" style="left:129px;top:865.0px;width:2522px;height:2px;background:#e9e9e9"></div>
<div class="a" style="left:163px;top:907.5px;width:26px;height:26px;border:3px solid #cbcbcb;border-radius:3.5px;box-sizing:border-box;background:#fff"></div>
<svg class="a" style="left:212.90px;top:905.95px;color:#d9d9d9;" width="27.4" height="26.2" viewBox="0 0 576 512" preserveAspectRatio="none"><path fill="currentColor" d="M259.3 17.8L194 150.200 47.900 171.500c-26.200 3.800-36.700 36.100-17.700 54.600l105.700 103-25 145.500c-4.500 26.300 23.200 46 46.400 33.700L288 439.600l130.700 68.700c23.200 12.200 50.900-7.400 46.400-33.700l-25-145.500 105.700-103c19-18.500 8.500-50.800-17.700-54.600L382 150.200 316.700 17.800c-11.700-23.600-45.600-23.900-57.400 0z"/></svg>
<svg class="a" style="left:267.70px;top:897.70px;" width="50" height="50" viewBox="0 0 50 50"><g fill="none" stroke="#b2b2b2" stroke-width="1.350"><circle cx="25.100" cy="25" r="24.200" stroke-width="1.500"/><path d="M1.600 19.500L5.700 21.500Q16 11.500 34.500 8.300L43 10.300"/><path d="M29 2.600L34.500 8.300Q42.200 22 41.600 35.500Q41.200 40 39.800 43.800"/><path d="M34.500 8.300Q31 24 21.700 33.900L12.200 44.100"/><path d="M1.300 24.600L5.700 21.500Q11.500 28.800 21.700 33.900Q31.500 37.300 41.600 35.500L48.200 33.600"/></g><g fill="#b2b2b2"><circle cx="34.500" cy="8.300" r="2.400"/><circle cx="5.700" cy="21.500" r="2.400"/><circle cx="21.700" cy="33.900" r="2.400"/><circle cx="41.600" cy="35.500" r="2.400"/></g></svg>
<div class="t" style="left:327px;top:905.71px;font-size:32.12px;font-weight:normal;color:#222;">apieceofewe.com</div>
<div class="t" style="left:1624.3px;top:906.57px;font-size:26.02px;font-weight:normal;color:#1c4fa3;">apieceewe@mailinat…</div>
<div class="a" style="left:1917px;top:905.5px;width:55px;height:31px;background:#8425e0;border-radius:6px"></div>
<div class="t" style="left:1923.38px;top:910.67px;font-size:21.3px;font-weight:bold;color:#fff;-webkit-text-stroke:0.3px #fff;">4</div>
<svg class="a" style="left:1942.30px;top:912.20px;color:#fff;" width="21.5" height="16.2" viewBox="0 0 22 17"><rect x="0" y="0" width="22" height="17" rx="2.800" fill="#fff"/><path d="M1 3.300L9.600 9.900Q11 10.900 12.400 9.900L21 3.300" fill="none" stroke="#8425e0" stroke-width="2"/></svg>
<svg class="a" style="left:2057.00px;top:905.20px;color:#8425e0;" width="26.25" height="30" viewBox="0 0 448 512"><path fill="currentColor" d="M400 32H48C21.5 32 0 53.5 0 80v352c0 26.5 21.5 48 48 48h352c26.5 0 48-21.5 48-48V80c0-26.5-21.5-48-48-48z"/><rect x="64" y="128" width="320" height="256" rx="28" fill="#fff"/><path d="M64 178L200 282Q224 300 248 282L384 178" fill="none" stroke="currentColor" stroke-width="34"/></svg>
<svg class="a" style="left:2091.25px;top:905.20px;color:#8425e0;" width="26.25" height="30" viewBox="0 0 448 512"><path fill="currentColor" d="M400 32H48C21.5 32 0 53.5 0 80v352c0 26.5 21.5 48 48 48h352c26.5 0 48-21.5 48-48V80c0-26.5-21.5-48-48-48z"/><path fill="#fff" d="M94 416c-7.033 0-13.057-4.873-14.616-11.627l-14.998-65a15 15 0 0 1 8.707-17.160l69.998-29.999a15 15 0 0 1 17.518 4.289l30.997 37.885c48.944-22.963 88.297-62.858 110.781-110.780l-37.886-30.997a15.001 15.001 0 0 1-4.289-17.518l30-69.998a15 15 0 0 1 17.160-8.707l65 14.998A14.997 14.997 0 0 1 384 126c0 160.292-129.945 290-290 290z"/></svg>
<svg class="a" style="left:2125.50px;top:905.20px;color:#8425e0;" width="26.25" height="30" viewBox="0 0 448 512"><path fill="currentColor" d="M400 32H48A48 48 0 0 0 0 80v352a48 48 0 0 0 48 48h137.250V327.690h-63V256h63v-54.640c0-62.150 37-96.480 93.670-96.480 27.140 0 55.520 4.840 55.520 4.840v61h-31.270c-30.810 0-40.420 19.120-40.420 38.730V256h68.780l-11 71.690h-57.780V480H400a48 48 0 0 0 48-48V80a48 48 0 0 0-48-48z"/></svg>
<svg class="a" style="left:2159.75px;top:905.20px;color:#8425e0;" width="26.25" height="30" viewBox="0 0 448 512"><path fill="currentColor" d="M400 32H48C21.500 32 0 53.500 0 80v352c0 26.500 21.500 48 48 48h352c26.500 0 48-21.500 48-48V80c0-26.500-21.500-48-48-48zm-48.900 158.800c.2 2.800.2 5.700.2 8.500 0 86.700-66 186.600-186.600 186.600-37.200 0-71.700-10.800-100.700-29.400 5.300.6 10.400.8 15.800.8 30.700 0 58.900-10.400 81.400-28-28.800-.6-53-19.500-61.300-45.500 10.100 1.500 19.200 1.500 29.600-1.200-30-6.100-52.500-32.500-52.500-64.400v-.8c8.700 4.900 18.900 7.900 29.600 8.300a65.447 65.447 0 0 1-29.200-54.600c0-12.200 3.200-23.400 8.900-33.100 32.300 39.800 80.800 65.800 135.200 68.600-9.300-44.500 24-80.600 64-80.600 18.900 0 35.900 7.900 47.900 20.700 14.800-2.800 29-8.300 41.600-15.800-4.900 15.200-15.200 28-28.800 36.100 13.200-1.400 26-5.100 37.800-10.200-8.900 13.100-20.100 24.700-32.900 34z"/></svg>
<svg class="a" style="left:2194.00px;top:905.20px;color:#8425e0;" width="26.25" height="30" viewBox="0 0 448 512"><path fill="currentColor" d="M224.100 141c-63.600 0-114.900 51.300-114.900 114.900s51.300 114.900 114.900 114.900S339 319.500 339 255.900 287.700 141 224.100 141zm0 189.600c-41.100 0-74.700-33.500-74.700-74.700s33.500-74.700 74.700-74.700 74.700 33.500 74.700 74.700-33.600 74.700-74.700 74.700zm146.400-194.300c0 14.900-12 26.800-26.800 26.800-14.900 0-26.800-12-26.800-26.800s12-26.800 26.800-26.800 26.800 12 26.800 26.800zm76.100 27.200c-1.700-35.900-9.900-67.700-36.200-93.900-26.200-26.200-58-34.400-93.900-36.200-37-2.100-147.900-2.100-184.900 0-35.800 1.700-67.600 9.900-93.900 36.100s-34.400 58-36.200 93.900c-2.100 37-2.100 147.900 0 184.900 1.700 35.900 9.900 67.700 36.200 93.900s58 34.400 93.900 36.200c37 2.100 147.900 2.100 184.900 0 35.900-1.700 67.700-9.900 93.900-36.200 26.200-26.200 34.400-58 36.200-93.900 2.100-37 2.100-147.800 0-184.800zM398.800 388c-7.800 19.600-22.900 34.700-42.600 42.600-29.500 11.700-99.500 9-132.100 9s-102.700 2.600-132.100-9c-19.600-7.800-34.700-22.900-42.600-42.600-11.700-29.500-9-99.500-9-132.100s-2.600-102.700 9-132.100c7.800-19.600 22.900-34.700 42.600-42.600 29.500-11.700 99.500-9 132.100-9s102.700-2.600 132.100 9c19.600 7.800 34.700 22.900 42.600 42.600 11.700 29.500 9 99.500 9 132.100s2.700 102.700-9 132.100z"/></svg>
<svg class="a" style="left:2228.25px;top:905.20px;color:#8425e0;" width="26.25" height="30" viewBox="0 0 448 512"><path fill="currentColor" d="M448 80v352c0 26.500-21.500 48-48 48H154.400c9.800-16.400 22.400-40 27.400-59.300 3-11.500 15.300-58.400 15.300-58.400 8 15.300 31.400 28.200 56.300 28.200 74.100 0 127.400-68.100 127.400-152.700 0-81.100-66.200-141.800-151.400-141.800-106 0-162.200 71.100-162.200 148.600 0 36 19.200 80.800 49.800 95.100 4.700 2.200 7.100 1.200 8.200-3.300.8-3.400 5-20.100 6.800-27.800.6-2.500.3-4.600-1.700-7-10.100-12.300-18.300-34.900-18.300-56 0-54.200 41-106.600 110.900-106.600 60.300 0 102.600 41.100 102.600 99.900 0 66.400-33.500 112.400-77.200 112.400-24.100 0-42.100-19.900-36.400-44.400 6.900-29.200 20.300-60.700 20.300-81.800 0-53-75.500-45.700-75.500 25 0 21.700 7.300 36.500 7.300 36.500-31.400 132.800-36.100 134.500-29.600 192.600l2.200.8H48c-26.500 0-48-21.500-48-48V80c0-26.500 21.500-48 48-48h352c26.500 0 48 21.500 48 48z"/></svg>
<svg class="a" style="left:2262.50px;top:905.20px;color:#8425e0;" width="33.75" height="30" viewBox="0 0 576 512"><path fill="currentColor" d="M549.655 124.083c-6.281-23.650-24.787-42.276-48.284-48.597C458.781 64 288 64 288 64S117.220 64 74.629 75.486c-23.497 6.322-42.003 24.947-48.284 48.597-11.412 42.867-11.412 132.305-11.412 132.305s0 89.438 11.412 132.305c6.281 23.650 24.787 41.500 48.284 47.821C117.220 448 288 448 288 448s170.780 0 213.371-11.486c23.497-6.321 42.003-24.171 48.284-47.821 11.412-42.867 11.412-132.305 11.412-132.305s0-89.438-11.412-132.305zm-317.510 213.508V175.185l142.739 81.205-142.739 81.201z"/></svg>
<svg class="a" style="left:2304.25px;top:905.20px;color:#8425e0;" width="30" height="30" viewBox="0 0 512 512"><path fill="currentColor" d="M48 32H464a48 48 0 0 1 48 48V432a48 48 0 0 1-48 48H48a48 48 0 0 1-48-48V80a48 48 0 0 1 48-48Z"/><circle cx="98" cy="131" r="29" fill="#fff"/><rect x="166" y="102" width="282" height="58" rx="22" fill="#fff"/></svg>
<div class="a" style="left:129px;top:973.5px;width:2522px;height:2px;background:#e9e9e9"></div>
<div class="a" style="left:163px;top:1016.0px;width:26px;height:26px;border:3px solid #cbcbcb;border-radius:3.5px;box-sizing:border-box;background:#fff"></div>
<svg class="a" style="left:212.90px;top:1014.45px;color:#d9d9d9;" width="27.4" height="26.2" viewBox="0 0 576 512" preserveAspectRatio="none"><path fill="currentColor" d="M259.3 17.8L194 150.200 47.900 171.500c-26.200 3.800-36.700 36.100-17.700 54.600l105.700 103-25 145.500c-4.500 26.300 23.200 46 46.400 33.700L288 439.600l130.700 68.700c23.200 12.200 50.900-7.400 46.400-33.700l-25-145.500 105.700-103c19-18.500 8.500-50.800-17.700-54.600L382 150.200 316.700 17.800c-11.700-23.600-45.600-23.900-57.400 0z"/></svg>
<svg class="a" style="left:267.70px;top:1006.20px;" width="50" height="50" viewBox="0 0 50 50"><g fill="none" stroke="#b2b2b2" stroke-width="1.350"><circle cx="25.100" cy="25" r="24.200" stroke-width="1.500"/><path d="M1.600 19.500L5.700 21.500Q16 11.500 34.500 8.300L43 10.300"/><path d="M29 2.600L34.500 8.300Q42.200 22 41.600 35.500Q41.200 40 39.800 43.800"/><path d="M34.500 8.300Q31 24 21.700 33.900L12.200 44.100"/><path d="M1.300 24.600L5.700 21.500Q11.500 28.800 21.700 33.900Q31.500 37.300 41.600 35.500L48.200 33.600"/></g><g fill="#b2b2b2"><circle cx="34.500" cy="8.300" r="2.400"/><circle cx="5.700" cy="21.500" r="2.400"/><circle cx="21.700" cy="33.900" r="2.400"/><circle cx="41.600" cy="35.500" r="2.400"/></g></svg>
<div class="t" style="left:327px;top:1014.21px;font-size:32.12px;font-weight:normal;color:#222;">backstageknitting…</div>
<div class="t" style="left:1624.3px;top:1015.07px;font-size:26.02px;font-weight:normal;color:#aaaaaa;">Caitlin &lt;caitlinknit@n…</div>
<div class="a" style="left:1917px;top:1014.0px;width:55px;height:31px;background:#8425e0;border-radius:6px"></div>
<div class="t" style="left:1922.36px;top:1019.17px;font-size:21.3px;font-weight:bold;color:#fff;-webkit-text-stroke:0.3px #fff;">1</div>
<svg class="a" style="left:1942.30px;top:1020.70px;color:#fff;" width="21.5" height="16.2" viewBox="0 0 22 17"><rect x="0" y="0" width="22" height="17" rx="2.800" fill="#fff"/><path d="M1 3.300L9.600 9.900Q11 10.900 12.400 9.900L21 3.300" fill="none" stroke="#8425e0" stroke-width="2"/></svg>
<svg class="a" style="left:2057.00px;top:1013.70px;color:#8425e0;" width="26.25" height="30" viewBox="0 0 448 512"><path fill="currentColor" d="M400 32H48C21.5 32 0 53.5 0 80v352c0 26.5 21.5 48 48 48h352c26.5 0 48-21.5 48-48V80c0-26.5-21.5-48-48-48z"/><rect x="64" y="128" width="320" height="256" rx="28" fill="#fff"/><path d="M64 178L200 282Q224 300 248 282L384 178" fill="none" stroke="currentColor" stroke-width="34"/></svg>
<svg class="a" style="left:2091.25px;top:1013.70px;color:#8425e0;" width="26.25" height="30" viewBox="0 0 448 512"><path fill="currentColor" d="M400 32H48A48 48 0 0 0 0 80v352a48 48 0 0 0 48 48h137.250V327.690h-63V256h63v-54.640c0-62.150 37-96.480 93.670-96.480 27.140 0 55.520 4.840 55.520 4.840v61h-31.270c-30.810 0-40.420 19.120-40.420 38.730V256h68.780l-11 71.690h-57.780V480H400a48 48 0 0 0 48-48V80a48 48 0 0 0-48-48z"/></svg>
<svg class="a" style="left:2125.50px;top:1013.70px;color:#8425e0;" width="33.75" height="30" viewBox="0 0 576 512"><path fill="currentColor" d="M549.655 124.083c-6.281-23.650-24.787-42.276-48.284-48.597C458.781 64 288 64 288 64S117.220 64 74.629 75.486c-23.497 6.322-42.003 24.947-48.284 48.597-11.412 42.867-11.412 132.305-11.412 132.305s0 89.438 11.412 132.305c6.281 23.650 24.787 41.500 48.284 47.821C117.220 448 288 448 288 448s170.780 0 213.371-11.486c23.497-6.321 42.003-24.171 48.284-47.821 11.412-42.867 11.412-132.305 11.412-132.305s0-89.438-11.412-132.305zm-317.510 213.508V175.185l142.739 81.205-142.739 81.201z"/></svg>
<svg class="a" style="left:2167.25px;top:1013.70px;color:#8425e0;" width="30" height="30" viewBox="0 0 512 512"><path fill="currentColor" d="M48 32H464a48 48 0 0 1 48 48V432a48 48 0 0 1-48 48H48a48 48 0 0 1-48-48V80a48 48 0 0 1 48-48Z"/><circle cx="98" cy="131" r="29" fill="#fff"/><rect x="166" y="102" width="282" height="58" rx="22" fill="#fff"/></svg>
<div class="a" style="left:129px;top:1082.0px;width:2522px;height:2px;background:#e9e9e9"></div>
<div class="a" style="left:163px;top:1124.5px;width:26px;height:26px;border:3px solid #cbcbcb;border-radius:3.5px;box-sizing:border-box;background:#fff"></div>
<svg class="a" style="left:212.90px;top:1122.95px;color:#d9d9d9;" width="27.4" height="26.2" viewBox="0 0 576 512" preserveAspectRatio="none"><path fill="currentColor" d="M259.3 17.8L194 150.200 47.900 171.500c-26.200 3.800-36.700 36.100-17.700 54.600l105.700 103-25 145.500c-4.500 26.300 23.200 46 46.400 33.700L288 439.600l130.700 68.700c23.200 12.200 50.900-7.400 46.400-33.700l-25-145.500 105.700-103c19-18.500 8.500-50.800-17.700-54.600L382 150.200 316.700 17.800c-11.700-23.600-45.600-23.900-57.400 0z"/></svg>
<svg class="a" style="left:267.70px;top:1114.70px;" width="50" height="50" viewBox="0 0 50 50"><g fill="none" stroke="#b2b2b2" stroke-width="1.350"><circle cx="25.100" cy="25" r="24.200" stroke-width="1.500"/><path d="M1.600 19.500L5.700 21.500Q16 11.500 34.500 8.300L43 10.300"/><path d="M29 2.600L34.500 8.300Q42.200 22 41.600 35.500Q41.200 40 39.800 43.800"/><path d="M34.500 8.300Q31 24 21.700 33.900L12.200 44.100"/><path d="M1.300 24.600L5.700 21.500Q11.500 28.800 21.700 33.900Q31.500 37.300 41.600 35.500L48.200 33.600"/></g><g fill="#b2b2b2"><circle cx="34.500" cy="8.300" r="2.400"/><circle cx="5.700" cy="21.500" r="2.400"/><circle cx="21.700" cy="33.900" r="2.400"/><circle cx="41.600" cy="35.500" r="2.400"/></g></svg>
<div class="t" style="left:327px;top:1122.71px;font-size:32.12px;font-weight:normal;color:#222;">blazing-needles.c…</div>
<div class="t" style="left:1624.3px;top:1123.57px;font-size:26.02px;font-weight:normal;color:#aaaaaa;">Blazing Team &lt;blazin…</div>
<div class="a" style="left:1917px;top:1122.5px;width:55px;height:31px;background:#8425e0;border-radius:6px"></div>
<div class="t" style="left:1922.36px;top:1127.67px;font-size:21.3px;font-weight:bold;color:#fff;-webkit-text-stroke:0.3px #fff;">1</div>
<svg class="a" style="left:1942.30px;top:1129.20px;color:#fff;" width="21.5" height="16.2" viewBox="0 0 22 17"><rect x="0" y="0" width="22" height="17" rx="2.800" fill="#fff"/><path d="M1 3.300L9.600 9.900Q11 10.900 12.400 9.900L21 3.300" fill="none" stroke="#8425e0" stroke-width="2"/></svg>
<svg class="a" style="left:2057.00px;top:1122.20px;color:#8425e0;" width="26.25" height="30" viewBox="0 0 448 512"><path fill="currentColor" d="M400 32H48C21.5 32 0 53.5 0 80v352c0 26.5 21.5 48 48 48h352c26.5 0 48-21.5 48-48V80c0-26.5-21.5-48-48-48z"/><rect x="64" y="128" width="320" height="256" rx="28" fill="#fff"/><path d="M64 178L200 282Q224 300 248 282L384 178" fill="none" stroke="currentColor" stroke-width="34"/></svg>
<svg class="a" style="left:2091.25px;top:1122.20px;color:#8425e0;" width="26.25" height="30" viewBox="0 0 448 512"><path fill="currentColor" d="M400 32H48C21.5 32 0 53.5 0 80v352c0 26.5 21.5 48 48 48h352c26.5 0 48-21.5 48-48V80c0-26.5-21.5-48-48-48z"/><path fill="#fff" d="M94 416c-7.033 0-13.057-4.873-14.616-11.627l-14.998-65a15 15 0 0 1 8.707-17.160l69.998-29.999a15 15 0 0 1 17.518 4.289l30.997 37.885c48.944-22.963 88.297-62.858 110.781-110.780l-37.886-30.997a15.001 15.001 0 0 1-4.289-17.518l30-69.998a15 15 0 0 1 17.160-8.707l65 14.998A14.997 14.997 0 0 1 384 126c0 160.292-129.945 290-290 290z"/></svg>
<svg class="a" style="left:2125.50px;top:1122.20px;color:#8425e0;" width="26.25" height="30" viewBox="0 0 448 512"><path fill="currentColor" d="M400 32H48A48 48 0 0 0 0 80v352a48 48 0 0 0 48 48h137.250V327.690h-63V256h63v-54.640c0-62.150 37-96.480 93.670-96.480 27.140 0 55.520 4.840 55.520 4.840v61h-31.270c-30.810 0-40.420 19.120-40.420 38.730V256h68.780l-11 71.690h-57.780V480H400a48 48 0 0 0 48-48V80a48 48 0 0 0-48-48z"/></svg>
<svg class="a" style="left:2159.75px;top:1122.20px;color:#8425e0;" width="26.25" height="30" viewBox="0 0 448 512"><path fill="currentColor" d="M224.100 141c-63.600 0-114.900 51.300-114.900 114.900s51.300 114.900 114.900 114.900S339 319.500 339 255.900 287.700 141 224.100 141zm0 189.600c-41.100 0-74.700-33.500-74.700-74.700s33.500-74.700 74.700-74.700 74.700 33.500 74.700 74.700-33.600 74.700-74.700 74.700zm146.400-194.300c0 14.900-12 26.800-26.800 26.800-14.900 0-26.800-12-26.800-26.800s12-26.800 26.800-26.800 26.800 12 26.800 26.800zm76.100 27.200c-1.700-35.900-9.900-67.700-36.200-93.900-26.200-26.200-58-34.400-93.900-36.200-37-2.100-147.900-2.100-184.900 0-35.800 1.700-67.600 9.900-93.900 36.100s-34.400 58-36.200 93.900c-2.100 37-2.100 147.900 0 184.900 1.700 35.900 9.900 67.700 36.200 93.900s58 34.400 93.900 36.200c37 2.100 147.900 2.100 184.900 0 35.900-1.700 67.700-9.900 93.900-36.200 26.200-26.200 34.400-58 36.200-93.900 2.100-37 2.100-147.800 0-184.800zM398.800 388c-7.800 19.600-22.900 34.700-42.600 42.600-29.500 11.700-99.500 9-132.100 9s-102.700 2.600-132.100-9c-19.600-7.800-34.700-22.900-42.600-42.600-11.700-29.500-9-99.500-9-132.100s-2.600-102.700 9-132.100c7.800-19.600 22.900-34.700 42.600-42.600 29.500-11.700 99.500-9 132.100-9s102.700-2.600 132.100 9c19.600 7.800 34.700 22.900 42.600 42.600 11.700 29.500 9 99.500 9 132.100s2.700 102.700-9 132.100z"/></svg>
<svg class="a" style="left:2194.00px;top:1122.20px;color:#8425e0;" width="30" height="30" viewBox="0 0 512 512"><path fill="currentColor" d="M48 32H464a48 48 0 0 1 48 48V432a48 48 0 0 1-48 48H48a48 48 0 0 1-48-48V80a48 48 0 0 1 48-48Z"/><circle cx="98" cy="131" r="29" fill="#fff"/><rect x="166" y="102" width="282" height="58" rx="22" fill="#fff"/></svg>
<div class="a" style="left:129px;top:1190.5px;width:2522px;height:2px;background:#e9e9e9"></div>
<div class="a" style="left:163px;top:1233.0px;width:26px;height:26px;border:3px solid #cbcbcb;border-radius:3.5px;box-sizing:border-box;background:#fff"></div>
<svg class="a" style="left:212.90px;top:1231.45px;color:#d9d9d9;" width="27.4" height="26.2" viewBox="0 0 576 512" preserveAspectRatio="none"><path fill="currentColor" d="M259.3 17.8L194 150.200 47.900 171.500c-26.200 3.800-36.700 36.100-17.700 54.600l105.700 103-25 145.500c-4.500 26.300 23.200 46 46.400 33.700L288 439.600l130.700 68.700c23.200 12.200 50.900-7.400 46.400-33.700l-25-145.500 105.700-103c19-18.500 8.500-50.800-17.700-54.600L382 150.200 316.700 17.800c-11.700-23.600-45.600-23.900-57.400 0z"/></svg>
<svg class="a" style="left:267.70px;top:1223.20px;" width="50" height="50" viewBox="0 0 50 50"><g fill="none" stroke="#b2b2b2" stroke-width="1.350"><circle cx="25.100" cy="25" r="24.200" stroke-width="1.500"/><path d="M1.600 19.500L5.700 21.500Q16 11.500 34.500 8.300L43 10.300"/><path d="M29 2.600L34.500 8.300Q42.200 22 41.600 35.500Q41.200 40 39.800 43.800"/><path d="M34.500 8.300Q31 24 21.700 33.900L12.200 44.100"/><path d="M1.300 24.600L5.700 21.500Q11.500 28.800 21.700 33.900Q31.500 37.300 41.600 35.500L48.200 33.600"/></g><g fill="#b2b2b2"><circle cx="34.500" cy="8.300" r="2.400"/><circle cx="5.700" cy="21.500" r="2.400"/><circle cx="21.700" cy="33.900" r="2.400"/><circle cx="41.600" cy="35.500" r="2.400"/></g></svg>
<div class="t" style="left:327px;top:1231.21px;font-size:32.12px;font-weight:normal;color:#222;">blog.nobleknits.com</div>
<div class="t" style="left:1624.3px;top:1232.07px;font-size:26.02px;font-weight:normal;color:#1c4fa3;">noble@mailinator.c… (2)</div>
<div class="a" style="left:1921px;top:1231.0px;width:55px;height:31px;background:#8425e0;border-radius:6px"></div>
<div class="t" style="left:1926.36px;top:1236.17px;font-size:21.3px;font-weight:bold;color:#fff;-webkit-text-stroke:0.3px #fff;">1</div>
<svg class="a" style="left:1946.30px;top:1237.70px;color:#fff;" width="21.5" height="16.2" viewBox="0 0 22 17"><rect x="0" y="0" width="22" height="17" rx="2.800" fill="#fff"/><path d="M1 3.300L9.600 9.900Q11 10.900 12.400 9.900L21 3.300" fill="none" stroke="#8425e0" stroke-width="2"/></svg>
<svg class="a" style="left:2057.00px;top:1230.70px;color:#8425e0;" width="26.25" height="30" viewBox="0 0 448 512"><path fill="currentColor" d="M400 32H48C21.5 32 0 53.5 0 80v352c0 26.5 21.5 48 48 48h352c26.5 0 48-21.5 48-48V80c0-26.5-21.5-48-48-48z"/><rect x="64" y="128" width="320" height="256" rx="28" fill="#fff"/><path d="M64 178L200 282Q224 300 248 282L384 178" fill="none" stroke="currentColor" stroke-width="34"/></svg>
<svg class="a" style="left:2091.25px;top:1230.70px;color:#8425e0;" width="26.25" height="30" viewBox="0 0 448 512"><path fill="currentColor" d="M400 32H48C21.5 32 0 53.5 0 80v352c0 26.5 21.5 48 48 48h352c26.5 0 48-21.5 48-48V80c0-26.5-21.5-48-48-48z"/><path fill="#fff" d="M94 416c-7.033 0-13.057-4.873-14.616-11.627l-14.998-65a15 15 0 0 1 8.707-17.160l69.998-29.999a15 15 0 0 1 17.518 4.289l30.997 37.885c48.944-22.963 88.297-62.858 110.781-110.780l-37.886-30.997a15.001 15.001 0 0 1-4.289-17.518l30-69.998a15 15 0 0 1 17.160-8.707l65 14.998A14.997 14.997 0 0 1 384 126c0 160.292-129.945 290-290 290z"/></svg>
<svg class="a" style="left:2125.50px;top:1230.70px;color:#8425e0;" width="26.25" height="30" viewBox="0 0 448 512"><path fill="currentColor" d="M400 32H48A48 48 0 0 0 0 80v352a48 48 0 0 0 48 48h137.250V327.690h-63V256h63v-54.640c0-62.150 37-96.480 93.670-96.480 27.140 0 55.520 4.840 55.520 4.840v61h-31.270c-30.810 0-40.420 19.120-40.420 38.730V256h68.780l-11 71.690h-57.780V480H400a48 48 0 0 0 48-48V80a48 48 0 0 0-48-48z"/></svg>
<svg class="a" style="left:2159.75px;top:1230.70px;color:#8425e0;" width="26.25" height="30" viewBox="0 0 448 512"><path fill="currentColor" d="M224.100 141c-63.600 0-114.900 51.300-114.900 114.900s51.300 114.900 114.900 114.900S339 319.500 339 255.900 287.700 141 224.100 141zm0 189.600c-41.100 0-74.700-33.500-74.700-74.700s33.500-74.700 74.700-74.700 74.700 33.500 74.700 74.700-33.600 74.700-74.700 74.700zm146.400-194.300c0 14.900-12 26.800-26.800 26.800-14.900 0-26.800-12-26.800-26.800s12-26.800 26.800-26.800 26.800 12 26.800 26.800zm76.100 27.200c-1.700-35.900-9.900-67.700-36.200-93.900-26.200-26.200-58-34.400-93.900-36.200-37-2.100-147.900-2.100-184.900 0-35.800 1.700-67.600 9.900-93.900 36.100s-34.400 58-36.200 93.900c-2.100 37-2.100 147.900 0 184.900 1.700 35.900 9.900 67.700 36.200 93.900s58 34.400 93.900 36.200c37 2.100 147.900 2.100 184.900 0 35.900-1.700 67.700-9.900 93.900-36.200 26.200-26.200 34.400-58 36.200-93.900 2.100-37 2.100-147.800 0-184.800zM398.800 388c-7.800 19.600-22.900 34.700-42.600 42.600-29.500 11.700-99.500 9-132.100 9s-102.700 2.600-132.100-9c-19.600-7.800-34.700-22.900-42.600-42.600-11.700-29.500-9-99.500-9-132.100s-2.600-102.700 9-132.100c7.800-19.600 22.900-34.700 42.600-42.600 29.500-11.700 99.500-9 132.100-9s102.700-2.600 132.100 9c19.600 7.800 34.700 22.900 42.600 42.600 11.700 29.500 9 99.500 9 132.100s2.700 102.700-9 132.100z"/></svg>
<svg class="a" style="left:2194.00px;top:1230.70px;color:#8425e0;" width="26.25" height="30" viewBox="0 0 448 512"><path fill="currentColor" d="M448 80v352c0 26.500-21.500 48-48 48H154.400c9.800-16.400 22.400-40 27.400-59.300 3-11.500 15.300-58.400 15.300-58.400 8 15.300 31.400 28.200 56.300 28.200 74.100 0 127.400-68.100 127.400-152.700 0-81.100-66.200-141.800-151.400-141.800-106 0-162.200 71.100-162.200 148.600 0 36 19.200 80.800 49.800 95.100 4.700 2.200 7.100 1.200 8.200-3.300.8-3.400 5-20.100 6.800-27.800.6-2.500.3-4.600-1.700-7-10.100-12.300-18.300-34.900-18.300-56 0-54.200 41-106.600 110.900-106.600 60.300 0 102.600 41.100 102.600 99.900 0 66.400-33.500 112.400-77.200 112.400-24.100 0-42.100-19.900-36.400-44.400 6.900-29.200 20.300-60.700 20.300-81.800 0-53-75.500-45.700-75.500 25 0 21.700 7.300 36.500 7.300 36.500-31.400 132.800-36.100 134.500-29.600 192.600l2.200.8H48c-26.500 0-48-21.500-48-48V80c0-26.500 21.500-48 48-48h352c26.500 0 48 21.500 48 48z"/></svg>
<svg class="a" style="left:2228.25px;top:1230.70px;color:#8425e0;" width="33.75" height="30" viewBox="0 0 576 512"><path fill="currentColor" d="M549.655 124.083c-6.281-23.650-24.787-42.276-48.284-48.597C458.781 64 288 64 288 64S117.220 64 74.629 75.486c-23.497 6.322-42.003 24.947-48.284 48.597-11.412 42.867-11.412 132.305-11.412 132.305s0 89.438 11.412 132.305c6.281 23.650 24.787 41.500 48.284 47.821C117.220 448 288 448 288 448s170.780 0 213.371-11.486c23.497-6.321 42.003-24.171 48.284-47.821 11.412-42.867 11.412-132.305 11.412-132.305s0-89.438-11.412-132.305zm-317.510 213.508V175.185l142.739 81.205-142.739 81.201z"/></svg>
<svg class="a" style="left:2270.00px;top:1230.70px;color:#8425e0;" width="30" height="30" viewBox="0 0 512 512"><path fill="currentColor" d="M48 32H464a48 48 0 0 1 48 48V432a48 48 0 0 1-48 48H48a48 48 0 0 1-48-48V80a48 48 0 0 1 48-48Z"/><circle cx="98" cy="131" r="29" fill="#fff"/><rect x="166" y="102" width="282" height="58" rx="22" fill="#fff"/></svg>
<div class="a" style="left:129px;top:1299.0px;width:2522px;height:2px;background:#e9e9e9"></div>
<div class="a" style="left:163px;top:1341.5px;width:26px;height:26px;border:3px solid #cbcbcb;border-radius:3.5px;box-sizing:border-box;background:#fff"></div>
<svg class="a" style="left:212.90px;top:1339.95px;color:#d9d9d9;" width="27.4" height="26.2" viewBox="0 0 576 512" preserveAspectRatio="none"><path fill="currentColor" d="M259.3 17.8L194 150.200 47.900 171.500c-26.200 3.800-36.700 36.100-17.700 54.600l105.700 103-25 145.500c-4.500 26.300 23.200 46 46.400 33.700L288 439.600l130.700 68.700c23.200 12.200 50.900-7.400 46.400-33.700l-25-145.500 105.700-103c19-18.500 8.500-50.800-17.700-54.600L382 150.200 316.700 17.800c-11.700-23.600-45.600-23.900-57.400 0z"/></svg>
<svg class="a" style="left:267.70px;top:1331.70px;" width="50" height="50" viewBox="0 0 50 50"><g fill="none" stroke="#b2b2b2" stroke-width="1.350"><circle cx="25.100" cy="25" r="24.200" stroke-width="1.500"/><path d="M1.600 19.500L5.700 21.500Q16 11.500 34.500 8.300L43 10.300"/><path d="M29 2.600L34.500 8.300Q42.200 22 41.600 35.500Q41.200 40 39.800 43.800"/><path d="M34.500 8.300Q31 24 21.700 33.900L12.200 44.100"/><path d="M1.300 24.600L5.700 21.500Q11.500 28.800 21.700 33.900Q31.500 37.300 41.600 35.500L48.200 33.600"/></g><g fill="#b2b2b2"><circle cx="34.500" cy="8.300" r="2.400"/><circle cx="5.700" cy="21.500" r="2.400"/><circle cx="21.700" cy="33.900" r="2.400"/><circle cx="41.600" cy="35.500" r="2.400"/></g></svg>
<div class="t" style="left:327px;top:1339.71px;font-size:32.12px;font-weight:normal;color:#222;">blog.theloopyewe…</div>
<div class="t" style="left:1624.3px;top:1340.57px;font-size:26.02px;font-weight:normal;color:#1c4fa3;">loopy@mailinator.com</div>
<div class="a" style="left:129px;top:1407.5px;width:2522px;height:2px;background:#e9e9e9"></div>
<div class="a" style="left:163px;top:1450.0px;width:26px;height:26px;border:3px solid #cbcbcb;border-radius:3.5px;box-sizing:border-box;background:#fff"></div>
<svg class="a" style="left:212.90px;top:1448.45px;color:#d9d9d9;" width="27.4" height="26.2" viewBox="0 0 576 512" preserveAspectRatio="none"><path fill="currentColor" d="M259.3 17.8L194 150.200 47.900 171.500c-26.200 3.800-36.700 36.100-17.700 54.600l105.700 103-25 145.500c-4.500 26.300 23.200 46 46.400 33.700L288 439.600l130.700 68.700c23.200 12.200 50.900-7.400 46.400-33.700l-25-145.500 105.700-103c19-18.500 8.500-50.800-17.700-54.600L382 150.200 316.700 17.800c-11.700-23.600-45.600-23.900-57.400 0z"/></svg>
<svg class="a" style="left:267.70px;top:1440.20px;" width="50" height="50" viewBox="0 0 50 50"><g fill="none" stroke="#b2b2b2" stroke-width="1.350"><circle cx="25.100" cy="25" r="24.200" stroke-width="1.500"/><path d="M1.600 19.500L5.700 21.500Q16 11.500 34.500 8.300L43 10.300"/><path d="M29 2.600L34.500 8.300Q42.200 22 41.600 35.500Q41.200 40 39.800 43.800"/><path d="M34.500 8.300Q31 24 21.700 33.900L12.200 44.100"/><path d="M1.300 24.600L5.700 21.500Q11.500 28.800 21.700 33.900Q31.500 37.300 41.600 35.500L48.200 33.600"/></g><g fill="#b2b2b2"><circle cx="34.500" cy="8.300" r="2.400"/><circle cx="5.700" cy="21.500" r="2.400"/><circle cx="21.700" cy="33.900" r="2.400"/><circle cx="41.600" cy="35.500" r="2.400"/></g></svg>
<div class="t" style="left:327px;top:1448.21px;font-size:32.12px;font-weight:normal;color:#222;">englishgirlathome…</div>
<div class="t" style="left:1624.3px;top:1449.07px;font-size:26.02px;font-weight:normal;color:#aaaaaa;">Charlotte &lt;charlottek…</div>
<div class="a" style="left:1917px;top:1448.0px;width:55px;height:31px;background:#8425e0;border-radius:6px"></div>
<div class="t" style="left:1922.36px;top:1453.17px;font-size:21.3px;font-weight:bold;color:#fff;-webkit-text-stroke:0.3px #fff;">1</div>
<svg class="a" style="left:1942.30px;top:1454.70px;color:#fff;" width="21.5" height="16.2" viewBox="0 0 22 17"><rect x="0" y="0" width="22" height="17" rx="2.800" fill="#fff"/><path d="M1 3.300L9.600 9.900Q11 10.900 12.400 9.900L21 3.300" fill="none" stroke="#8425e0" stroke-width="2"/></svg>
<svg class="a" style="left:2057.00px;top:1447.70px;color:#8425e0;" width="26.25" height="30" viewBox="0 0 448 512"><path fill="currentColor" d="M400 32H48C21.5 32 0 53.5 0 80v352c0 26.5 21.5 48 48 48h352c26.5 0 48-21.5 48-48V80c0-26.5-21.5-48-48-48z"/><rect x="64" y="128" width="320" height="256" rx="28" fill="#fff"/><path d="M64 178L200 282Q224 300 248 282L384 178" fill="none" stroke="currentColor" stroke-width="34"/></svg>
<svg class="a" style="left:2091.25px;top:1447.70px;color:#8425e0;" width="26.25" height="30" viewBox="0 0 448 512"><path fill="currentColor" d="M400 32H48C21.5 32 0 53.5 0 80v352c0 26.5 21.5 48 48 48h352c26.5 0 48-21.5 48-48V80c0-26.5-21.5-48-48-48z"/><path fill="#fff" d="M94 416c-7.033 0-13.057-4.873-14.616-11.627l-14.998-65a15 15 0 0 1 8.707-17.160l69.998-29.999a15 15 0 0 1 17.518 4.289l30.997 37.885c48.944-22.963 88.297-62.858 110.781-110.780l-37.886-30.997a15.001 15.001 0 0 1-4.289-17.518l30-69.998a15 15 0 0 1 17.160-8.707l65 14.998A14.997 14.997 0 0 1 384 126c0 160.292-129.945 290-290 290z"/></svg>
<svg class="a" style="left:2125.50px;top:1447.70px;color:#8425e0;" width="26.25" height="30" viewBox="0 0 448 512"><path fill="currentColor" d="M400 32H48A48 48 0 0 0 0 80v352a48 48 0 0 0 48 48h137.250V327.690h-63V256h63v-54.640c0-62.150 37-96.480 93.670-96.480 27.140 0 55.520 4.840 55.520 4.840v61h-31.270c-30.810 0-40.420 19.120-40.420 38.730V256h68.780l-11 71.690h-57.780V480H400a48 48 0 0 0 48-48V80a48 48 0 0 0-48-48z"/></svg>
<svg class="a" style="left:2159.75px;top:1447.70px;color:#8425e0;" width="26.25" height="30" viewBox="0 0 448 512"><path fill="currentColor" d="M400 32H48C21.500 32 0 53.500 0 80v352c0 26.500 21.500 48 48 48h352c26.500 0 48-21.500 48-48V80c0-26.500-21.500-48-48-48zm-48.900 158.800c.2 2.800.2 5.700.2 8.500 0 86.700-66 186.600-186.600 186.600-37.200 0-71.700-10.800-100.700-29.400 5.300.6 10.400.8 15.800.8 30.700 0 58.900-10.400 81.400-28-28.800-.6-53-19.500-61.300-45.500 10.100 1.500 19.200 1.500 29.600-1.200-30-6.100-52.500-32.500-52.500-64.400v-.8c8.700 4.900 18.900 7.900 29.600 8.300a65.447 65.447 0 0 1-29.200-54.600c0-12.200 3.200-23.400 8.900-33.100 32.300 39.800 80.800 65.800 135.200 68.600-9.300-44.500 24-80.600 64-80.600 18.900 0 35.900 7.900 47.900 20.700 14.800-2.800 29-8.300 41.600-15.800-4.900 15.200-15.200 28-28.800 36.100 13.200-1.400 26-5.100 37.800-10.200-8.900 13.100-20.100 24.700-32.900 34z"/></svg>
<svg class="a" style="left:2194.00px;top:1447.70px;color:#8425e0;" width="26.25" height="30" viewBox="0 0 448 512"><path fill="currentColor" d="M224.100 141c-63.600 0-114.900 51.300-114.900 114.900s51.300 114.900 114.900 114.900S339 319.500 339 255.900 287.700 141 224.100 141zm0 189.600c-41.100 0-74.700-33.500-74.700-74.700s33.500-74.700 74.700-74.700 74.700 33.500 74.700 74.700-33.600 74.700-74.700 74.700zm146.400-194.300c0 14.900-12 26.800-26.800 26.800-14.900 0-26.800-12-26.800-26.800s12-26.800 26.800-26.800 26.800 12 26.800 26.800zm76.100 27.200c-1.700-35.900-9.900-67.700-36.200-93.900-26.200-26.200-58-34.400-93.900-36.200-37-2.100-147.900-2.100-184.900 0-35.800 1.700-67.600 9.900-93.900 36.100s-34.400 58-36.200 93.900c-2.100 37-2.100 147.900 0 184.900 1.700 35.900 9.900 67.700 36.200 93.900s58 34.400 93.900 36.200c37 2.100 147.900 2.100 184.900 0 35.900-1.700 67.700-9.900 93.900-36.200 26.200-26.200 34.400-58 36.200-93.900 2.100-37 2.100-147.800 0-184.800zM398.800 388c-7.800 19.600-22.900 34.700-42.600 42.600-29.500 11.700-99.500 9-132.100 9s-102.700 2.600-132.100-9c-19.600-7.800-34.700-22.900-42.600-42.600-11.700-29.500-9-99.500-9-132.100s-2.600-102.700 9-132.100c7.800-19.600 22.900-34.700 42.600-42.600 29.500-11.700 99.500-9 132.100-9s102.700-2.600 132.100 9c19.600 7.800 34.700 22.900 42.600 42.600 11.700 29.500 9 99.500 9 132.100s2.700 102.700-9 132.100z"/></svg>
<svg class="a" style="left:2228.25px;top:1447.70px;color:#8425e0;" width="26.25" height="30" viewBox="0 0 448 512"><path fill="currentColor" d="M448 80v352c0 26.500-21.500 48-48 48H154.400c9.800-16.400 22.400-40 27.400-59.300 3-11.500 15.300-58.400 15.300-58.400 8 15.300 31.400 28.200 56.300 28.200 74.100 0 127.400-68.100 127.400-152.700 0-81.100-66.200-141.800-151.400-141.800-106 0-162.200 71.100-162.200 148.600 0 36 19.200 80.800 49.800 95.100 4.700 2.200 7.100 1.200 8.200-3.300.8-3.400 5-20.100 6.800-27.800.6-2.500.3-4.600-1.700-7-10.100-12.300-18.300-34.900-18.300-56 0-54.200 41-106.600 110.900-106.600 60.300 0 102.600 41.100 102.600 99.900 0 66.400-33.500 112.400-77.200 112.400-24.100 0-42.100-19.900-36.400-44.400 6.900-29.200 20.300-60.700 20.300-81.800 0-53-75.500-45.700-75.500 25 0 21.700 7.300 36.500 7.300 36.500-31.400 132.800-36.100 134.500-29.600 192.600l2.200.8H48c-26.500 0-48-21.500-48-48V80c0-26.500 21.500-48 48-48h352c26.500 0 48 21.500 48 48z"/></svg>
<svg class="a" style="left:2262.50px;top:1447.70px;color:#8425e0;" width="33.75" height="30" viewBox="0 0 576 512"><path fill="currentColor" d="M549.655 124.083c-6.281-23.650-24.787-42.276-48.284-48.597C458.781 64 288 64 288 64S117.220 64 74.629 75.486c-23.497 6.322-42.003 24.947-48.284 48.597-11.412 42.867-11.412 132.305-11.412 132.305s0 89.438 11.412 132.305c6.281 23.650 24.787 41.500 48.284 47.821C117.220 448 288 448 288 448s170.780 0 213.371-11.486c23.497-6.321 42.003-24.171 48.284-47.821 11.412-42.867 11.412-132.305 11.412-132.305s0-89.438-11.412-132.305zm-317.510 213.508V175.185l142.739 81.205-142.739 81.201z"/></svg>
<svg class="a" style="left:2304.25px;top:1447.70px;color:#8425e0;" width="30" height="30" viewBox="0 0 512 512"><path fill="currentColor" d="M48 32H464a48 48 0 0 1 48 48V432a48 48 0 0 1-48 48H48a48 48 0 0 1-48-48V80a48 48 0 0 1 48-48Z"/><circle cx="98" cy="131" r="29" fill="#fff"/><rect x="166" y="102" width="282" height="58" rx="22" fill="#fff"/></svg>
<div class="a" style="left:129px;top:1516.0px;width:2522px;height:2px;background:#e9e9e9"></div>
<div class="a" style="left:163px;top:1558.5px;width:26px;height:26px;border:3px solid #cbcbcb;border-radius:3.5px;box-sizing:border-box;background:#fff"></div>
<svg class="a" style="left:212.90px;top:1556.95px;color:#d9d9d9;" width="27.4" height="26.2" viewBox="0 0 576 512" preserveAspectRatio="none"><path fill="currentColor" d="M259.3 17.8L194 150.200 47.900 171.500c-26.200 3.800-36.700 36.100-17.700 54.600l105.700 103-25 145.500c-4.500 26.300 23.200 46 46.400 33.700L288 439.600l130.700 68.700c23.200 12.200 50.900-7.400 46.400-33.700l-25-145.500 105.700-103c19-18.500 8.500-50.800-17.700-54.600L382 150.200 316.700 17.800c-11.700-23.600-45.600-23.900-57.400 0z"/></svg>
<svg class="a" style="left:267.70px;top:1548.70px;" width="50" height="50" viewBox="0 0 50 50"><g fill="none" stroke="#b2b2b2" stroke-width="1.350"><circle cx="25.100" cy="25" r="24.200" stroke-width="1.500"/><path d="M1.600 19.500L5.700 21.500Q16 11.500 34.500 8.300L43 10.300"/><path d="M29 2.600L34.500 8.300Q42.200 22 41.600 35.500Q41.200 40 39.800 43.800"/><path d="M34.500 8.300Q31 24 21.700 33.900L12.200 44.100"/><path d="M1.300 24.600L5.700 21.500Q11.500 28.800 21.700 33.900Q31.500 37.300 41.600 35.500L48.200 33.600"/></g><g fill="#b2b2b2"><circle cx="34.500" cy="8.300" r="2.400"/><circle cx="5.700" cy="21.500" r="2.400"/><circle cx="21.700" cy="33.900" r="2.400"/><circle cx="41.600" cy="35.500" r="2.400"/></g></svg>
<div class="t" style="left:327px;top:1556.71px;font-size:32.12px;font-weight:normal;color:#222;">geekygirlsknit.blo…</div>
<div class="t" style="left:1624.3px;top:1557.57px;font-size:26.02px;font-weight:normal;color:#aaaaaa;">C.C. &lt;ccknit@ngsbph…</div>
<div class="a" style="left:1917px;top:1556.5px;width:55px;height:31px;background:#8425e0;border-radius:6px"></div>
<div class="t" style="left:1922.96px;top:1561.67px;font-size:21.3px;font-weight:bold;color:#fff;-webkit-text-stroke:0.3px #fff;">2</div>
<svg class="a" style="left:1942.30px;top:1563.20px;color:#fff;" width="21.5" height="16.2" viewBox="0 0 22 17"><rect x="0" y="0" width="22" height="17" rx="2.800" fill="#fff"/><path d="M1 3.300L9.600 9.900Q11 10.900 12.400 9.900L21 3.300" fill="none" stroke="#8425e0" stroke-width="2"/></svg>
<svg class="a" style="left:2057.00px;top:1556.20px;color:#8425e0;" width="26.25" height="30" viewBox="0 0 448 512"><path fill="currentColor" d="M400 32H48C21.5 32 0 53.5 0 80v352c0 26.5 21.5 48 48 48h352c26.5 0 48-21.5 48-48V80c0-26.5-21.5-48-48-48z"/><rect x="64" y="128" width="320" height="256" rx="28" fill="#fff"/><path d="M64 178L200 282Q224 300 248 282L384 178" fill="none" stroke="currentColor" stroke-width="34"/></svg>
<svg class="a" style="left:2091.25px;top:1556.20px;color:#8425e0;" width="26.25" height="30" viewBox="0 0 448 512"><path fill="currentColor" d="M400 32H48A48 48 0 0 0 0 80v352a48 48 0 0 0 48 48h137.250V327.690h-63V256h63v-54.640c0-62.150 37-96.480 93.670-96.480 27.140 0 55.520 4.840 55.520 4.840v61h-31.270c-30.810 0-40.420 19.120-40.420 38.730V256h68.780l-11 71.690h-57.780V480H400a48 48 0 0 0 48-48V80a48 48 0 0 0-48-48z"/></svg>
<svg class="a" style="left:2125.50px;top:1556.20px;color:#8425e0;" width="26.25" height="30" viewBox="0 0 448 512"><path fill="currentColor" d="M224.100 141c-63.600 0-114.900 51.300-114.900 114.900s51.300 114.900 114.900 114.900S339 319.500 339 255.900 287.700 141 224.100 141zm0 189.600c-41.100 0-74.700-33.500-74.700-74.700s33.500-74.700 74.700-74.700 74.700 33.500 74.700 74.700-33.600 74.700-74.700 74.700zm146.400-194.300c0 14.900-12 26.800-26.800 26.800-14.900 0-26.800-12-26.800-26.800s12-26.800 26.800-26.800 26.800 12 26.800 26.800zm76.100 27.200c-1.700-35.900-9.900-67.700-36.200-93.900-26.200-26.200-58-34.400-93.900-36.200-37-2.100-147.900-2.100-184.900 0-35.800 1.700-67.600 9.900-93.900 36.100s-34.400 58-36.200 93.900c-2.100 37-2.100 147.900 0 184.900 1.700 35.900 9.900 67.700 36.200 93.900s58 34.400 93.900 36.200c37 2.100 147.900 2.100 184.900 0 35.900-1.700 67.700-9.900 93.900-36.200 26.200-26.200 34.400-58 36.200-93.900 2.100-37 2.100-147.800 0-184.800zM398.800 388c-7.800 19.600-22.900 34.700-42.600 42.600-29.500 11.700-99.500 9-132.100 9s-102.700 2.600-132.100-9c-19.600-7.800-34.700-22.900-42.600-42.600-11.700-29.500-9-99.500-9-132.100s-2.600-102.700 9-132.100c7.800-19.600 22.900-34.700 42.600-42.600 29.500-11.700 99.500-9 132.100-9s102.700-2.600 132.100 9c19.600 7.800 34.700 22.900 42.600 42.600 11.700 29.500 9 99.500 9 132.100s2.700 102.700-9 132.100z"/></svg>
<svg class="a" style="left:2159.75px;top:1556.20px;color:#8425e0;" width="33.75" height="30" viewBox="0 0 576 512"><path fill="currentColor" d="M549.655 124.083c-6.281-23.650-24.787-42.276-48.284-48.597C458.781 64 288 64 288 64S117.220 64 74.629 75.486c-23.497 6.322-42.003 24.947-48.284 48.597-11.412 42.867-11.412 132.305-11.412 132.305s0 89.438 11.412 132.305c6.281 23.650 24.787 41.500 48.284 47.821C117.220 448 288 448 288 448s170.780 0 213.371-11.486c23.497-6.321 42.003-24.171 48.284-47.821 11.412-42.867 11.412-132.305 11.412-132.305s0-89.438-11.412-132.305zm-317.510 213.508V175.185l142.739 81.205-142.739 81.201z"/></svg>
<div class="a" style="left:0px;top:0px;width:129px;height:1616px;background:#1e4ca0;border-bottom-left-radius:18px"></div>
<div class="a" style="left:0px;top:216px;width:129px;height:2px;background:#183f88"></div>
<div class="a" style="left:0px;top:0px;width:129px;height:1px;background:#173f8a"></div>
<div class="a" style="left:0px;top:237px;width:129px;height:87.5px;background:#193e85"></div>
<div class="a" style="left:0px;top:237px;width:4.5px;height:87.5px;background:#00c8b8"></div>
<svg class="a" style="left:44px;top:32px" width="40" height="50" viewBox="0 0 40 50"><circle cx="8.100" cy="8.200" r="3.200" fill="#8fa6dc"/><circle cx="27.200" cy="6.100" r="3.200" fill="#8fa6dc"/><clipPath id="bz"><circle cx="20" cy="30" r="17.300"/></clipPath><g clip-path="url(#bz)"><g transform="rotate(-5 20 30)"><path d="M-2 8H42V26.500Q20 33.500 -2 26.500Z" fill="#fff"/><path d="M-2 29Q20 36 42 29V34.300Q20 41.300 -2 34.300Z" fill="#8fa6dc"/><path d="M-2 36.900Q20 43.900 42 36.900V52H-2Z" fill="#8fa6dc"/></g></g></svg>
<svg class="a" style="left:47.8px;top:125px" width="32.2" height="37" viewBox="0 0 448 512"><path fill="#6f8cca" d="M224 512c35.320 0 63.970-28.650 63.970-64H160.030c0 35.350 28.650 64 63.970 64z"/><path fill="#cfd8ee" d="M439.390 362.290c-19.320-20.760-55.470-51.990-55.470-154.290 0-77.700-54.480-139.900-127.940-155.160V32c0-17.670-14.320-32-31.980-32s-31.980 14.330-31.980 32v20.840C118.560 68.100 64.080 130.300 64.080 208c0 102.300-36.150 133.530-55.470 154.290-6 6.450-8.660 14.160-8.610 21.710.11 16.400 12.980 32 32.100 32h383.800c19.120 0 32-15.600 32.100-32 .05-7.550-2.610-15.270-8.610-21.710z"/></svg>
<svg class="a" style="left:70.4px;top:118.1px" width="34" height="34" viewBox="0 0 34 34"><circle cx="17" cy="17" r="15.700" fill="#f23b4c" stroke="#1e4ca0" stroke-width="2.200"/></svg>
<div class="t" style="left:81.300px;top:126.600px;font-size:19.800px;font-weight:bold;color:#fff">2</div>
<svg class="a" style="left:45.7px;top:264.2px" width="36.4" height="32.2" viewBox="0 0 36.400 32.200"><rect x="0" y="0" width="36.400" height="32.200" rx="4.500" fill="#fff"/><g fill="#193e85"><rect x="14" y="7.400" width="15.500" height="3.600" rx="0.600"/><rect x="14" y="14.200" width="15.500" height="3.600" rx="0.600"/><rect x="14" y="21" width="15.500" height="3.600" rx="0.600"/></g><g fill="#8fa1cf"><circle cx="9.200" cy="9.200" r="2.900"/><circle cx="9.200" cy="16" r="2.900"/><circle cx="9.200" cy="22.800" r="2.900"/></g></svg>
<svg class="a" style="left:42px;top:349px" width="44" height="39.5" viewBox="0 0 44 39.500"><rect x="6" y="1" width="27.500" height="18" rx="3" fill="#6f8cca"/><rect x="14.500" y="11.500" width="28.200" height="19.200" rx="3" fill="#6f8cca" stroke="#1e4ca0" stroke-width="2"/><rect x="33.300" y="17" width="4.800" height="4.800" fill="#c5d0ea"/><rect x="1" y="17.500" width="23.700" height="20.400" rx="3" fill="#cfd8ee" stroke="#1e4ca0" stroke-width="2"/><path d="M1.500 21.500L12.850 29.800 24.200 21.500" fill="none" stroke="#1e4ca0" stroke-width="2.300"/></svg>
<svg class="a" style="left:47.9px;top:438.8px" width="32" height="37" viewBox="0 0 32 37"><path d="M5 0H28Q32 0 32 4V27H6V33H31Q32 33 32 35Q32 37 30.500 37H5Q0 37 0 32V5Q0 0 5 0Z" fill="#cfd8ee"/><rect x="5" y="27.800" width="27" height="4.400" rx="1" fill="#6f8cca"/><circle cx="16.900" cy="9.100" r="4.600" fill="#1e4ca0"/><path d="M9 23Q9 16.400 14 16.400H20.200Q25.200 16.400 25.200 23Z" fill="#1e4ca0"/></svg>
<svg class="a" style="left:45.4px;top:526.7px" width="37.2" height="37.2" viewBox="0 0 512 512"><path fill="#6f8cca" d="M326.612 185.391c59.747 59.809 58.927 155.698.36 214.590-.110.120-.240.250-.360.370l-67.200 67.200c-59.270 59.270-155.699 59.262-214.960 0-59.270-59.260-59.270-155.700 0-214.960l37.106-37.106c9.840-9.840 26.786-3.300 27.294 10.606.648 17.722 3.826 35.527 9.690 52.721 1.986 5.822.567 12.262-3.783 16.612l-13.087 13.087c-28.026 28.026-28.905 73.660-1.155 101.960 28.024 28.579 74.086 28.749 102.325.510l67.200-67.190c28.191-28.191 28.073-73.757 0-101.830-3.701-3.694-7.429-6.564-10.341-8.569a16.037 16.037 0 0 1-6.947-12.606c-.396-10.567 3.348-21.456 11.698-29.806l21.054-21.055c5.521-5.521 14.182-6.199 20.584-1.731a152.482 152.482 0 0 1 20.522 17.197z"/><path fill="#cfd8ee" d="M467.547 44.449c-59.261-59.262-155.690-59.270-214.960 0l-67.200 67.200c-.120.120-.250.250-.360.370-58.566 58.892-59.387 154.781.360 214.590a152.454 152.454 0 0 0 20.521 17.196c6.402 4.468 15.064 3.789 20.584-1.731l21.054-21.055c8.350-8.350 12.094-19.239 11.698-29.806a16.037 16.037 0 0 0-6.947-12.606c-2.912-2.005-6.640-4.875-10.341-8.569-28.073-28.073-28.191-73.639 0-101.830l67.200-67.190c28.239-28.239 74.300-28.069 102.325.510 27.750 28.300 26.872 73.934-1.155 101.960l-13.087 13.087c-4.350 4.350-5.769 10.790-3.783 16.612 5.864 17.194 9.042 34.999 9.690 52.721.509 13.906 17.454 20.446 27.294 10.606l37.106-37.106c59.271-59.259 59.271-155.699.001-214.959z"/></svg>
<svg class="a" style="left:43.3px;top:615px" width="41.5" height="37.7" viewBox="0 0 41.500 37.700"><path d="M3.300 16L14.900 3.500 26.200 14 38.200 4.300" fill="none" stroke="#6f8cca" stroke-width="3"/><g fill="#6f8cca"><circle cx="3.300" cy="16" r="3.300"/><circle cx="14.900" cy="3.500" r="3.300"/><circle cx="26.200" cy="14" r="3.300"/><circle cx="38.200" cy="4.300" r="3.300"/></g><g fill="#cfd8ee"><rect x="0" y="25.900" width="7" height="11.800" rx="0.800"/><rect x="11.600" y="15" width="7" height="22.700" rx="0.800"/><rect x="22.800" y="24" width="7" height="13.700" rx="0.800"/><rect x="34.400" y="15" width="7" height="22.700" rx="0.800"/></g></svg>
<svg class="a" style="left:46.2px;top:1262.6px" width="35.5" height="35.5" viewBox="0 0 36.500 36.500"><circle cx="18.250" cy="18.250" r="18.200" fill="#6f8bcb"/><path d="M12.600 14.200Q12.600 8.800 18.300 8.800Q24 8.800 24 13.700Q24 16.500 21.200 17.800Q18.400 19.100 18.400 21.700" fill="none" stroke="#cfd8ee" stroke-width="4" stroke-linecap="round"/><circle cx="18.400" cy="27.600" r="2.600" fill="#cfd8ee"/></svg>
<svg class="a" style="left:52px;top:1351px" width="22" height="38" viewBox="0 0 22 38"><path d="M4 0.300H15.800Q17 0.300 16.800 1.500L14.500 19Q14.300 19.900 13.300 19.900H1.800Q0.500 19.900 0.700 18.600L2.900 1.200Q3.100 0.300 4 0.300Z" fill="#6f8cca"/><path d="M13.200 12L20.300 14.700Q21.400 15.200 20.800 16.300L9.300 36.400Q8.500 37.400 7.700 36.600Q7.200 36.100 7.400 35.300Z" fill="#cfd8ee" stroke="#1e4ca0" stroke-width="0.600"/></svg>
<svg class="a" style="left:73.5px;top:1347px" width="29" height="29" viewBox="0 0 29 29"><circle cx="14.500" cy="14.500" r="14.200" fill="#f23b4c"/><path transform="translate(6.300,6.300) scale(0.0285)" fill="#fff" d="M259.300 17.800L194 150.200 47.900 171.500c-26.200 3.800-36.700 36.100-17.700 54.600l105.700 103-25 145.500c-4.500 26.300 23.200 46 46.400 33.700L288 439.600l130.700 68.700c23.200 12.200 50.900-7.400 46.400-33.700l-25-145.500 105.700-103c19-18.500 8.500-50.800-17.700-54.600L382 150.200 316.700 17.800c-11.700-23.600-45.600-23.900-57.400 0z"/></svg>
<svg class="a" style="left:46.2px;top:1439.5px" width="35.5" height="35.5" viewBox="0 0 512 512"><path fill="#6f8cca" d="M487.400 315.700l-42.600-24.600c4.300-23.200 4.300-47 0-70.200l42.600-24.600c4.900-2.800 7.100-8.600 5.500-14-11.100-35.600-30-67.800-54.700-94.600-3.800-4.100-10-5.100-14.800-2.300L380.800 110c-17.900-15.400-38.500-27.300-60.800-35.100V25.800c0-5.600-3.900-10.500-9.400-11.700-36.700-8.200-74.300-7.800-109.200 0-5.500 1.200-9.400 6.100-9.400 11.700V75c-22.200 7.900-42.800 19.800-60.800 35.100L88.700 85.500c-4.900-2.800-11-1.900-14.800 2.300-24.700 26.700-43.600 58.900-54.700 94.600-1.700 5.400.6 11.200 5.500 14L67.300 221c-4.300 23.200-4.300 47 0 70.200l-42.600 24.600c-4.900 2.800-7.100 8.600-5.500 14 11.100 35.600 30 67.800 54.700 94.600 3.800 4.100 10 5.100 14.800 2.300l42.600-24.600c17.900 15.400 38.500 27.300 60.800 35.100v49.200c0 5.600 3.900 10.500 9.400 11.700 36.700 8.200 74.300 7.800 109.200 0 5.500-1.200 9.400-6.100 9.400-11.700v-49.200c22.200-7.900 42.800-19.800 60.800-35.100l42.600 24.600c4.900 2.800 11 1.900 14.800-2.300 24.700-26.700 43.600-58.900 54.700-94.600 1.500-5.500-.7-11.300-5.600-14.100zM256 336c-44.100 0-80-35.900-80-80s35.900-80 80-80 80 35.900 80 80-35.900 80-80 80z"/><circle cx="256" cy="256" r="102" fill="#1e4ca0"/><circle cx="256" cy="256" r="66" fill="#cfd8ee"/></svg>
<svg class="a" style="left:45.5px;top:1528.7px" width="37" height="37" viewBox="0 0 37 37"><clipPath id="av"><circle cx="18.500" cy="18.500" r="18.300"/></clipPath><filter id="avb" x="-20%" y="-20%" width="140%" height="140%"><feGaussianBlur stdDeviation="0.900"/></filter><circle cx="18.500" cy="18.500" r="18.300" fill="#c6c6c6"/><g clip-path="url(#av)"><g fill="#fff" filter="url(#avb)"><ellipse cx="18.500" cy="14.800" rx="6.600" ry="7.800"/><path d="M2 39Q4 24.500 13 23.500Q18.500 26.500 24 23.500Q33 24.500 35 39Z"/></g></g></svg>
<div class="a" style="left:112px;top:0px;width:17px;height:1616px;background:linear-gradient(90deg,rgba(10,30,80,0),rgba(10,30,80,.06) 40%,rgba(10,30,80,.22))"></div>
<div class="a" style="left:2650.5px;top:0px;width:2.5px;height:1616px;background:#ababab"></div>
<div class="a" style="left:2650.5px;top:382px;width:2.5px;height:19px;background:#222"></div>
<div class="a" style="left:2650.5px;top:1490px;width:2.5px;height:130px;background:#555"></div>
</div>
</body></html>
